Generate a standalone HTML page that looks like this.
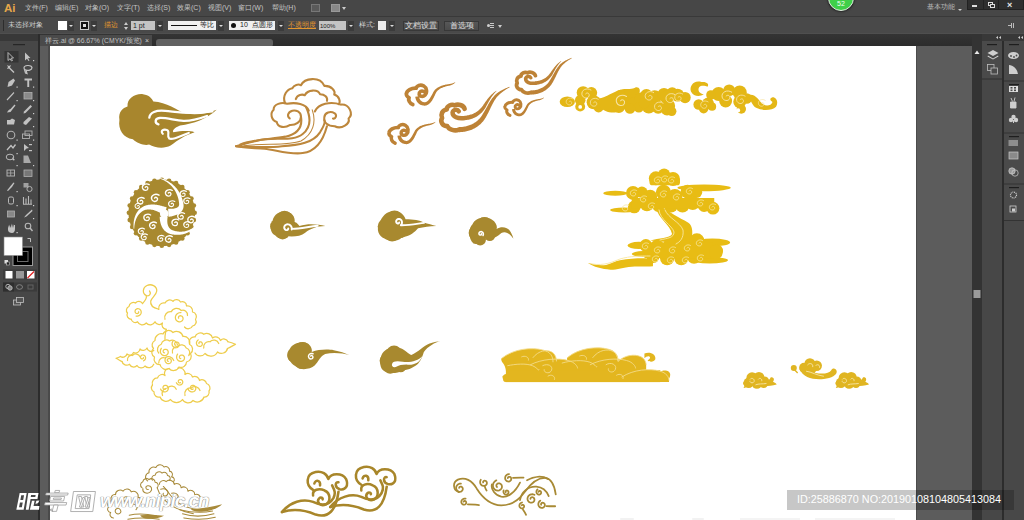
<!DOCTYPE html>
<html><head><meta charset="utf-8">
<style>
*{margin:0;padding:0;box-sizing:border-box}
html,body{width:1024px;height:520px;overflow:hidden;background:#454545;font-family:"Liberation Sans",sans-serif}
.a{position:absolute}
#menubar{left:0;top:0;width:1024px;height:17px;background:#474747;border-bottom:1px solid #393939}
.mi{position:absolute;top:3px;font-size:7px;line-height:10px;color:#c4c4c4;white-space:nowrap}
#ctrl{left:0;top:17px;width:1024px;height:17px;background:#494949;border-bottom:1px solid #4f4f4f}
.ct{position:absolute;font-size:8px;line-height:10px;color:#d6d6d6;white-space:nowrap}
.dd{position:absolute;top:4px;width:6px;height:10px;background:#3b3b3b}
.dd:after{content:"";position:absolute;left:1px;top:4px;border-left:2px solid transparent;border-right:2px solid transparent;border-top:2px solid #dcdcdc}
.box{position:absolute;top:4px;height:9px}
.btn{position:absolute;top:4px;height:10px;background:linear-gradient(#575757,#4b4b4b);border:1px solid #383838;font-size:7.5px;line-height:8px;color:#e0e0e0;text-align:center}
#tabrow{left:40px;top:34px;width:932px;height:12px;background:linear-gradient(#343434,#2c2c2c)}
#tools{left:0;top:34px;width:38px;height:486px;background:#474747}
#toolsb{left:38px;top:34px;width:2px;height:486px;background:#2c2c2c}
#artboard{left:50px;top:46px;width:866px;height:474px;background:#ffffff}
#pbL{left:40px;top:46px;width:10px;height:474px;background:#5c5c5c}
#pbR{left:916px;top:46px;width:56px;height:474px;background:#5c5c5c}
#scroll{left:972px;top:34px;width:10px;height:486px;background:#343434}
#dock1{left:982px;top:34px;width:21px;height:486px;background:#474747;border-left:1px solid #2e2e2e}
#dock2{left:1003px;top:34px;width:21px;height:486px;background:#474747;border-left:2px solid #2e2e2e}
.ti{position:absolute;width:9px;height:9px}
</style></head><body>
<div id="menubar" class="a">
  <div class="a" style="left:4px;top:1px;font-size:11.5px;font-weight:bold;color:#e6a84a;line-height:14px">Ai</div>
  <div class="mi" style="left:25px">文件(F)</div>
  <div class="mi" style="left:55px">编辑(E)</div>
  <div class="mi" style="left:85px">对象(O)</div>
  <div class="mi" style="left:117px">文字(T)</div>
  <div class="mi" style="left:147px">选择(S)</div>
  <div class="mi" style="left:177px">效果(C)</div>
  <div class="mi" style="left:208px">视图(V)</div>
  <div class="mi" style="left:238px">窗口(W)</div>
  <div class="mi" style="left:272px">帮助(H)</div>
  <div class="a" style="left:311px;top:4px;width:9px;height:8px;background:#5a5a5a;border:1px solid #777"></div>
  <div class="a" style="left:331px;top:4px;width:9px;height:8px;background:#888;border:1px solid #999"></div>
  <div class="a" style="left:342px;top:7px;border-left:2px solid transparent;border-right:2px solid transparent;border-top:3px solid #ccc"></div>
  <div class="a" style="left:828px;top:-15px;width:26px;height:26px;border-radius:50%;background:#3fcf49;border:1.5px solid #e4ece4;box-shadow:0 0 1.5px 1px #2a2a2a"></div>
  <div class="a" style="left:837px;top:0px;font-size:7px;line-height:8px;color:#f0fff0">52</div>
  <div class="mi" style="left:927px;top:2px;color:#bdbdbd">基本功能</div>
  <div class="a" style="left:958px;top:9px;border-left:2px solid transparent;border-right:2px solid transparent;border-top:2px solid #ccc"></div>
  <div class="a" style="left:967px;top:0;width:57px;height:10px;background:#2f2f2f;border:1px solid #222;border-top:0"></div>
  <div class="a" style="left:983px;top:0;width:1px;height:10px;background:#222"></div>
  <div class="a" style="left:998px;top:0;width:1px;height:10px;background:#222"></div>
  <div class="a" style="left:972px;top:5px;width:5px;height:2px;background:#ddd"></div>
  <div class="a" style="left:988px;top:2px;width:5px;height:4px;border:1px solid #ddd"></div>
  <div class="a" style="left:990px;top:4px;width:5px;height:4px;border:1px solid #ddd;background:#2f2f2f"></div>
  <div class="a" style="left:1007px;top:0px;font-size:9px;line-height:10px;color:#e8e8e8;font-weight:bold">×</div>
</div>
<div id="ctrl" class="a">
  <div class="a" style="left:3px;top:3px;width:1px;height:11px;background:#2d2d2d"></div>
  <div class="ct" style="left:8px;top:3px;font-size:6.6px;color:#cfcfcf">未选择对象</div>
  <div class="box" style="left:58px;width:9px;background:#fff"></div>
  <div class="dd" style="left:68px"></div>
  <div class="box" style="left:80px;width:9px;background:#111;border:1px solid #ccc"></div>
  <div class="a" style="left:83px;top:7px;width:3px;height:3px;background:#ddd"></div>
  <div class="dd" style="left:91px"></div>
  <div class="ct" style="left:104px;top:3px;color:#e2962e;font-size:7px">描边</div>
  <div class="a" style="left:124px;top:5px;border-left:2px solid transparent;border-right:2px solid transparent;border-bottom:3px solid #ccc"></div>
  <div class="a" style="left:124px;top:10px;border-left:2px solid transparent;border-right:2px solid transparent;border-top:3px solid #ccc"></div>
  <div class="box" style="left:131px;width:24px;background:#c4c4c4"></div>
  <div class="ct" style="left:133px;top:4px;color:#222;font-size:7px">1 pt</div>
  <div class="dd" style="left:157px"></div>
  <div class="box" style="left:168px;width:48px;background:#f0f0f0"></div>
  <div class="a" style="left:171px;top:8px;width:26px;height:1px;background:#111"></div>
  <div class="ct" style="left:200px;top:3px;color:#222;font-size:7px">等比</div>
  <div class="dd" style="left:218px"></div>
  <div class="box" style="left:229px;width:46px;background:#f0f0f0"></div>
  <div class="a" style="left:231px;top:6px;width:5px;height:5px;border-radius:50%;background:#111"></div>
  <div class="ct" style="left:240px;top:3px;color:#222;font-size:7px">10&nbsp; 点圆形</div>
  <div class="dd" style="left:278px"></div>
  <div class="ct" style="left:288px;top:3px;color:#e2962e;font-size:6.6px;text-decoration:underline">不透明度</div>
  <div class="box" style="left:319px;width:27px;background:#c4c4c4"></div>
  <div class="ct" style="left:320px;top:4px;color:#222;font-size:6px">100%</div>
  <div class="dd" style="left:348px"></div>
  <div class="ct" style="left:359px;top:3px;font-size:6.5px">样式:</div>
  <div class="box" style="left:378px;width:8px;background:#ececec"></div>
  <div class="dd" style="left:389px"></div>
  <div class="btn" style="left:403px;width:36px">文档设置</div>
  <div class="btn" style="left:444px;width:35px">首选项</div>
  <div class="a" style="left:487px;top:7px;width:3px;height:3px;background:#d0d0d0;border-radius:50%"></div><div class="a" style="left:490px;top:6px;width:4px;height:1px;background:#c8c8c8"></div><div class="a" style="left:490px;top:8px;width:4px;height:1px;background:#c8c8c8"></div><div class="a" style="left:490px;top:10px;width:4px;height:1px;background:#c8c8c8"></div>
  <div class="a" style="left:498px;top:8px;border-left:2px solid transparent;border-right:2px solid transparent;border-top:3px solid #ccc"></div>
  <div class="a" style="left:1008px;top:8px;width:3px;height:1px;background:#bbb"></div><div class="a" style="left:1011px;top:6px;width:1px;height:5px;background:#bbb"></div><div class="a" style="left:1013px;top:6px;width:1px;height:5px;background:#bbb"></div>
</div>
<div id="tabrow" class="a"></div>
<div class="a" style="left:40px;top:35px;width:112px;height:11px;background:#4a4a4a"></div>
<div class="ct" style="left:45px;top:36px;font-size:6.8px;color:#c0c0c0">祥云.ai @ 66.67% (CMYK/预览)</div>
<div class="ct" style="left:145px;top:36px;font-size:7px;color:#cfcfcf">×</div>
<div class="a" style="left:156px;top:39px;width:117px;height:8px;background:#616161;border-radius:3px"></div>
<div id="tools" class="a"></div>
<div id="toolsb" class="a"></div>
<div class="a" style="left:0;top:34px;width:38px;height:7px;background:#383838"></div>
<div class="a" style="left:14px;top:44px;width:10px;height:1px;background:#222"></div>
<svg class="a" style="left:0;top:34px" width="40" height="290" viewBox="0 34 40 290">
<rect x="4.5" y="51" width="14" height="11.5" fill="#353535"/>
<rect x="13" y="44" width="12" height="1.2" fill="#262626"/>
<g fill="#c2c2c2" stroke="none">
<!-- row1 -->
<path d="M8 52.5 L13.5 58 L11 58.2 L12.5 60.5 L11.5 61 L10 58.8 L8 60.5 Z" fill="none" stroke="#c2c2c2" stroke-width="0.9"/>
<path d="M25 52.5 L30.5 58 L28 58.2 L29.5 60.5 L28.5 61 L27 58.8 L25 60.5 Z"/>
<!-- row2 wand/lasso -->
<path d="M7 65 L9 66 L11 65 L10 67.5 L14.5 72 L13.5 73 L9 68.5 L7 69 L8 67 Z"/>
<path d="M24 68 C24 65 31 64.5 32 67.5 C32 70 28 71 26 70 L27 73.5 L25.5 73 Z" fill="none" stroke="#c2c2c2" stroke-width="1.2"/>
<!-- row3 pen/T -->
<path d="M13.5 78.5 L8.5 82 L7.5 87 L12 85.5 L15 80.5 Z"/>
<path d="M24.5 78.5 H32 V80.5 H29.2 V87 H27.3 V80.5 H24.5 Z"/>
<!-- row4 line/rect -->
<path d="M7 100 L14 92.5" stroke="#c2c2c2" stroke-width="1.1"/>
<rect x="24" y="92.5" width="8" height="6.5" fill="#8a8a8a" stroke="#b0b0b0" stroke-width="0.8"/>
<!-- row5 brush/pencil -->
<path d="M14.5 104.5 L10.5 109 C9 109.5 8 110.5 7 112.5 L10.5 112 L12 110 L15.5 105.5 Z"/>
<path d="M30.5 105 L32 106.5 L25.5 113 L23.5 113.5 L24 111.5 Z"/>
<!-- row6 blob/eraser -->
<path d="M7 120 L7 124.5 L14 124.5 L15 120 L12 118.5 L10 120 Z"/>
<path d="M29 117 L32 118.5 L26 125 L23.5 124 L23.5 122 Z"/>
<!-- row7 rotate/scale -->
<circle cx="11" cy="135" r="3.8" fill="none" stroke="#b0b0b0" stroke-width="1.1"/>
<rect x="22.5" y="134" width="7" height="4.5" fill="none" stroke="#b0b0b0" stroke-width="0.9"/>
<rect x="25" y="131" width="7" height="4.5" fill="none" stroke="#b0b0b0" stroke-width="0.9"/>
<!-- row8 width/free transform -->
<path d="M7 150 L11 145.5 L13 148 L15.5 144.5" fill="none" stroke="#c2c2c2" stroke-width="1.3"/>
<path d="M24 144 L29 148 L26.5 148.5 L24 151 Z"/>
<rect x="29" y="144" width="3" height="1.2"/><rect x="29" y="150" width="3" height="1.2"/>
<!-- row9 shape builder / persp -->
<ellipse cx="10" cy="157" rx="3.8" ry="2.8" fill="none" stroke="#b8b8b8" stroke-width="1"/>
<path d="M12 157 L15 160 L13 160.5 Z"/>
<path d="M23.5 155.5 L23.5 163 L31 163 L28 155.5 Z" fill="#a8a8a8"/>
<!-- row10 mesh/gradient -->
<rect x="7" y="170" width="7.5" height="6" fill="none" stroke="#b8b8b8" stroke-width="0.9"/>
<path d="M7 173 H14.5 M10.7 170 V176" stroke="#b8b8b8" stroke-width="0.7"/>
<rect x="24" y="170" width="8" height="6.5" fill="#777" stroke="#b0b0b0" stroke-width="0.8"/>
<!-- row11 eyedropper/blend -->
<path d="M14.5 183 L12 187 L8 191 L7 190.5 L10.5 186 L13.5 182.5 Z"/>
<rect x="23.5" y="183" width="5" height="4.5" fill="#a0a0a0"/>
<circle cx="29.5" cy="189" r="2.6" fill="none" stroke="#b8b8b8" stroke-width="0.9"/>
<!-- row12 symbol/graph -->
<rect x="8.5" y="197" width="5" height="7" rx="1.5" fill="none" stroke="#b8b8b8" stroke-width="1"/>
<path d="M23.5 204 V197 M26 204 V198.5 M28.5 204 V196 M31 204 V199.5 M23 204.3 H32" stroke="#b8b8b8" stroke-width="1.1"/>
<!-- row13 artboard/slice -->
<rect x="7.5" y="211" width="7" height="6" fill="#888" stroke="#b0b0b0" stroke-width="0.8"/>
<path d="M32 209.5 L26 215 L24 217.5 L26.5 216.5 L32.5 211 Z"/>
<!-- row14 hand/zoom -->
<path d="M8 225 L8 230 C8 232 10 233 12 233 C14 233 15 231 15 229 L15 225 L14 225 L14 228 L13 224 L12 228 L11.5 223.5 L10.5 228 L9.5 224.5 L9 228 Z"/>
<circle cx="28" cy="226" r="2.8" fill="none" stroke="#b8b8b8" stroke-width="1.1"/>
<path d="M30 228 L32.5 231" stroke="#b8b8b8" stroke-width="1.4"/>
</g>
<g fill="#d0d0d0">
<rect x="33" y="60" width="1.2" height="1.2"/><rect x="16.5" y="86.5" width="1.2" height="1.2"/><rect x="33" y="86.5" width="1.2" height="1.2"/>
<rect x="16.5" y="100" width="1.2" height="1.2"/><rect x="33" y="100" width="1.2" height="1.2"/><rect x="33" y="113" width="1.2" height="1.2"/>
<rect x="33" y="126" width="1.2" height="1.2"/><rect x="16.5" y="139.5" width="1.2" height="1.2"/><rect x="33" y="139.5" width="1.2" height="1.2"/>
<rect x="16.5" y="153" width="1.2" height="1.2"/><rect x="16.5" y="165" width="1.2" height="1.2"/><rect x="33" y="165" width="1.2" height="1.2"/>
<rect x="16.5" y="191" width="1.2" height="1.2"/><rect x="16.5" y="205" width="1.2" height="1.2"/><rect x="33" y="205" width="1.2" height="1.2"/>
<rect x="33" y="218" width="1.2" height="1.2"/><rect x="16.5" y="232" width="1.2" height="1.2"/>
</g>
<rect x="13" y="247" width="19.5" height="18.5" fill="#000" stroke="#9a9a9a" stroke-width="1"/>
<rect x="17.5" y="251.5" width="10.5" height="10" fill="none" stroke="#6a6a6a" stroke-width="1"/>
<rect x="4" y="237" width="18.5" height="18.5" fill="#fff" stroke="#8a8a8a" stroke-width="0.6"/>
<path d="M27.5 238.5 H30.5 V242" fill="none" stroke="#c8c8c8" stroke-width="0.9"/>
<rect x="4.5" y="260" width="3.5" height="3.5" fill="#ddd"/><rect x="6.5" y="262" width="3" height="3" fill="#222" stroke="#ddd" stroke-width="0.5"/>
<rect x="3" y="269.5" width="34" height="10" fill="#3d3d3d"/>
<rect x="5.5" y="271" width="7" height="7.5" fill="#fff"/>
<rect x="16" y="271" width="8" height="7.5" fill="#999"/>
<rect x="27" y="271" width="7.5" height="7.5" fill="#fff"/>
<path d="M27.5 278 L34 271.5" stroke="#e02020" stroke-width="1.3"/>
<rect x="3" y="282.5" width="34" height="9" fill="#3b3b3b"/>
<rect x="3" y="282.5" width="11" height="9" fill="#2e2e2e"/>
<circle cx="8" cy="286.5" r="2.2" fill="none" stroke="#bbb" stroke-width="0.9"/><circle cx="10" cy="288" r="2.2" fill="#888" stroke="#bbb" stroke-width="0.9"/>
<ellipse cx="19.5" cy="287" rx="3" ry="2.3" fill="none" stroke="#888" stroke-width="0.9"/>
<rect x="28" y="285" width="5" height="4" fill="none" stroke="#666" stroke-width="0.9"/>
<rect x="13.5" y="300" width="7" height="5" fill="#555" stroke="#c0c0c0" stroke-width="0.8"/>
<rect x="16.5" y="297.5" width="7" height="5" fill="#555" stroke="#c0c0c0" stroke-width="0.8"/>
</svg>

<div id="pbL" class="a"></div><div class="a" style="left:48px;top:46px;width:2px;height:474px;background:#4a4a4a"></div>
<div id="artboard" class="a"></div>
<div id="pbR" class="a"></div><div class="a" style="left:916px;top:46px;width:1px;height:474px;background:#4c4c4c"></div>
<div id="scroll" class="a"></div>
<div id="dock1" class="a"></div>
<div id="dock2" class="a"></div>
<svg class="a" style="left:972px;top:34px" width="52" height="486" viewBox="972 34 52 486">
<rect x="972" y="34" width="10" height="486" fill="#333333"/>
<path d="M974.5 54 L977 50.5 L979.5 54 Z" fill="#e8e8e8"/>
<rect x="973.5" y="290" width="7" height="8" fill="#9a9a9a"/>
<rect x="982" y="34" width="20" height="486" fill="#474747"/>
<rect x="1002" y="34" width="2" height="486" fill="#2c2c2c"/>
<rect x="1004" y="34" width="20" height="486" fill="#484848"/>
<rect x="982" y="34" width="42" height="7" fill="#383838"/>
<rect x="982" y="41" width="20" height="37.5" fill="#4a4a4a"/>
<rect x="982" y="78.5" width="20" height="1" fill="#333"/>
<rect x="1004" y="41" width="20" height="179" fill="#4a4a4a"/>
<rect x="1004" y="80.5" width="20" height="1" fill="#333"/>
<rect x="1004" y="132.5" width="20" height="1" fill="#333"/>
<rect x="1004" y="183.5" width="20" height="1" fill="#333"/>
<rect x="1004" y="220" width="20" height="1" fill="#333"/>
<g fill="#1e1e1e"><rect x="987" y="44" width="10" height="1.2"/><rect x="1009" y="44" width="10" height="1.2"/><rect x="1009" y="84" width="10" height="1.2"/><rect x="1009" y="136" width="10" height="1.2"/><rect x="1009" y="187" width="10" height="1.2"/></g>
<g fill="#cfcfcf">
<path d="M996 37.5 L998 36 V39 Z M999 37.5 L1001 36 V39 Z"/>
<path d="M1018 37.5 L1020 36 V39 Z M1021 37.5 L1023 36 V39 Z"/>
<path d="M993 50 L998.5 53 L993 56 L987.5 53 Z"/>
<path d="M988 55.5 L993 58.5 L998 55.5 L998.5 56.5 L993 59.5 L987.5 56.5 Z"/>
<rect x="987.5" y="64.5" width="6.5" height="6" fill="none" stroke="#bdbdbd" stroke-width="0.8"/>
<rect x="991" y="68" width="6.5" height="6" fill="#4a4a4a" stroke="#bdbdbd" stroke-width="0.8"/>
<ellipse cx="1013.5" cy="55.5" rx="5.5" ry="3.5"/>
<g fill="#4a4a4a"><circle cx="1011" cy="56" r="0.9"/><circle cx="1014" cy="57" r="0.9"/><circle cx="1016.5" cy="55.5" r="0.9"/></g>
<path d="M1009 74 L1009 65 C1013 65 1017 68.5 1018 74 Z"/>
<rect x="1009" y="86" width="9" height="6" fill="#ddd"/>
<g fill="#4a4a4a"><rect x="1010.5" y="87" width="2" height="1.6"/><rect x="1014" y="87" width="2" height="1.6"/><rect x="1010.5" y="89.5" width="2" height="1.6"/><rect x="1014" y="89.5" width="2" height="1.6"/></g>
<path d="M1010.5 102 H1016 V108 H1010.5 Z M1011 98 L1012.5 101.5 M1015 97.5 L1014 101.5" stroke="#cfcfcf" stroke-width="0.9"/>
<circle cx="1013.5" cy="117" r="2.2"/><circle cx="1011" cy="120" r="2.2"/><circle cx="1016" cy="120" r="2.2"/><rect x="1013" y="120" width="1" height="3"/>
<rect x="1008.5" y="140.5" width="9.5" height="1"/><rect x="1008.5" y="142.5" width="9.5" height="1"/><rect x="1008.5" y="144.5" width="9.5" height="1"/>
<rect x="1009" y="152" width="9" height="7" fill="#8a8a8a" stroke="#c8c8c8" stroke-width="0.7"/>
<circle cx="1012" cy="171" r="3.2" fill="#9a9a9a" stroke="#cfcfcf" stroke-width="0.7"/><circle cx="1015" cy="173" r="3.2" fill="none" stroke="#cfcfcf" stroke-width="0.7"/>
<circle cx="1013.5" cy="195" r="3" fill="none" stroke="#cfcfcf" stroke-width="1.2" stroke-dasharray="1 0.8"/>
<rect x="1010" y="206" width="6" height="6" fill="none" stroke="#cfcfcf" stroke-width="0.8"/><rect x="1012" y="208.5" width="3" height="3"/>
</g>
</svg>

<svg class="a" id="art" style="left:0;top:0" width="1024" height="520" viewBox="0 0 1024 520">
<g transform="translate(110 85) scale(0.13468)">
<path fill="#a8862d" d="M70 260 C60 200 95 170 130 160 C125 100 185 62 245 68 C290 74 312 100 322 122 C420 125 500 190 560 212 C650 228 730 210 792 184 C720 250 620 290 520 300 C475 318 462 338 470 350 C530 340 590 338 628 350 C560 372 510 402 450 450 C400 476 330 466 290 442 C255 452 200 432 170 402 C100 396 58 330 70 260 Z"/>
<path fill="none" stroke="#fff" stroke-width="17" stroke-linecap="round" d="M292 242 C296 205 340 185 410 192 C500 200 600 222 760 196"/>
<path fill="none" stroke="#fff" stroke-width="17" stroke-linecap="round" d="M360 292 C330 285 332 248 368 245 C420 242 480 262 545 266 C610 268 670 248 720 230"/>
<path fill="none" stroke="#fff" stroke-width="16" stroke-linecap="round" d="M392 362 C372 345 395 322 425 335 C448 348 418 380 440 398 C470 412 520 378 585 356"/>
</g>
<g transform="translate(230 70) scale(0.1731)" fill="none" stroke="#bd873c" stroke-width="12" stroke-linecap="round" stroke-linejoin="round">
<path d="M318 192 C300 150 330 110 360 105 C370 85 395 80 410 88 C430 45 520 35 545 92 C585 90 612 120 602 142 C632 152 640 182 628 198"/>
<path d="M380 168 C388 142 418 138 432 146 C448 112 508 110 520 140 C548 140 566 160 560 178"/>
<path d="M455 235 C440 195 380 185 330 195 C300 185 250 195 252 230 C230 250 238 290 270 300 C275 335 320 335 345 318 C380 320 410 300 410 270 C410 240 380 230 360 235 C330 245 330 270 345 280"/>
<path d="M490 240 C510 195 580 180 640 200 C690 195 715 255 685 280 C695 310 645 345 605 325 C565 325 540 305 545 272 C548 245 580 235 605 250 C620 262 610 285 595 280"/>
<path d="M440 215 C470 280 470 330 420 370 C360 420 250 380 150 410 C110 420 70 430 35 440 C120 445 220 450 300 440 C400 435 480 420 520 360 C545 320 550 300 545 290"/>
<path d="M410 270 C420 330 390 370 320 385 C240 400 140 400 60 430"/>
<path d="M560 325 C540 400 500 470 420 480 C340 490 260 460 200 455 C140 450 80 450 35 440"/>
<path d="M475 230 C500 300 480 370 410 410 C330 440 200 420 80 438" stroke-width="6"/>
</g>

<g transform="translate(400.0 75.0) scale(0.0673)" fill="none" stroke="#bd8236" stroke-linecap="round" stroke-linejoin="round"><path d="M240 195 C170 190 100 230 95 280 C90 310 120 330 135 340 C120 370 140 420 190 440" stroke-width="56"/><path d="M350 245 C320 225 280 250 285 285 C290 320 340 330 370 300 C410 260 400 190 350 160 C300 135 250 160 240 195" stroke-width="54"/><path d="M227.1 322.9 L227.8 329.4 L228.9 336.4 L230.2 343.3 L231.8 350.2 L233.7 356.9 L235.9 363.6 L238.4 370.1 L241.1 376.5 L244.2 382.7 L247.6 388.8 L251.2 394.7 L255.1 400.4 L259.4 405.9 L263.9 411.3 L268.7 416.3 L273.8 421.2 L279.1 425.7 L284.8 430.0 L290.7 434.0 L296.8 437.7 L303.2 441.1 L309.8 444.1 L316.7 446.8 L323.8 449.1 L331.0 451.1 L338.5 452.7 L346.1 453.9 L353.9 454.7 L361.9 455.1 L371.1 455.1 L380.8 453.9 L389.6 452.0 L398.1 449.3 L406.2 446.0 L414.0 442.1 L421.4 437.6 L428.5 432.7 L435.2 427.3 L441.6 421.6 L447.7 415.5 L453.6 409.1 L459.2 402.5 L464.6 395.5 L469.8 388.4 L474.8 381.0 L479.7 373.4 L484.4 365.6 L489.0 357.7 L493.4 349.7 L497.8 341.6 L502.0 333.3 L506.2 325.0 L510.3 316.7 L514.3 308.3 L518.2 299.9 L522.1 291.5 L526.0 283.2 L529.8 275.0 L533.6 266.8 L536.8 259.8 L539.6 255.5 L543.3 250.3 L547.2 245.3 L551.4 240.4 L555.8 235.6 L560.5 231.0 L565.5 226.5 L570.7 222.1 L576.1 217.9 L581.8 213.7 L587.8 209.7 L594.0 205.9 L600.4 202.1 L607.1 198.5 L614.0 195.0 L621.1 191.6 L628.4 188.3 L636.0 185.2 L643.8 182.2 L651.7 179.3 L659.9 176.5 L668.3 173.9 L676.9 171.3 L685.6 168.9 L694.6 166.5 L703.7 164.3 L712.9 162.2 L722.4 160.2 L732.0 158.3 L742.1 156.4 L746.8 154.9 L750.8 153.5 L754.7 152.1 L758.4 150.7 L762.2 149.3 L765.8 147.8 L769.3 146.3 L772.8 144.7 L776.1 143.2 L779.4 141.6 L782.6 140.0 L785.6 138.4 L788.6 136.8 L791.5 135.2 L794.2 133.6 L796.9 131.9 L799.5 130.3 L801.9 128.6 L804.2 127.0 L806.4 125.3 L808.5 123.7 L810.5 122.0 L812.4 120.4 L814.1 118.8 L815.7 117.1 L817.1 115.5 L818.4 113.9 L819.6 112.4 L820.7 110.8 L821.5 109.3 L818.5 106.7 L817.2 107.6 L815.9 108.5 L814.4 109.4 L812.8 110.4 L811.1 111.3 L809.3 112.2 L807.4 113.2 L805.3 114.1 L803.2 115.1 L801.0 116.1 L798.6 117.0 L796.2 118.0 L793.6 119.0 L791.0 120.0 L788.3 120.9 L785.4 121.9 L782.5 122.8 L779.5 123.8 L776.4 124.7 L773.2 125.6 L769.9 126.5 L766.6 127.4 L763.2 128.3 L759.7 129.1 L756.1 130.0 L752.4 130.8 L748.7 131.6 L744.9 132.3 L741.1 133.1 L737.9 133.6 L728.2 134.8 L718.2 136.2 L708.3 137.7 L698.6 139.4 L689.0 141.1 L679.5 143.0 L670.2 145.0 L661.0 147.1 L652.0 149.4 L643.1 151.8 L634.3 154.4 L625.8 157.1 L617.4 160.0 L609.1 163.0 L601.0 166.3 L593.1 169.7 L585.4 173.2 L577.9 177.0 L570.5 181.0 L563.3 185.1 L556.4 189.5 L549.6 194.1 L543.1 198.9 L536.7 204.0 L530.6 209.2 L524.8 214.7 L519.1 220.5 L513.8 226.5 L508.7 232.7 L503.2 240.2 L498.4 249.3 L494.2 257.4 L489.9 265.5 L485.7 273.6 L481.5 281.6 L477.2 289.6 L473.0 297.6 L468.7 305.4 L464.3 313.1 L460.0 320.7 L455.6 328.0 L451.2 335.2 L446.7 342.2 L442.2 348.9 L437.7 355.3 L433.1 361.4 L428.5 367.2 L423.8 372.6 L419.2 377.6 L414.5 382.3 L409.8 386.5 L405.1 390.2 L400.5 393.6 L395.9 396.5 L391.3 398.9 L386.7 400.9 L382.2 402.5 L377.6 403.7 L373.0 404.5 L368.9 404.9 L364.3 404.5 L358.9 404.0 L353.7 403.2 L348.8 402.2 L344.0 401.0 L339.5 399.5 L335.2 397.9 L331.2 396.1 L327.3 394.1 L323.6 391.9 L320.0 389.6 L316.7 387.1 L313.5 384.4 L310.4 381.6 L307.6 378.7 L304.8 375.5 L302.2 372.3 L299.8 368.9 L297.5 365.3 L295.4 361.6 L293.4 357.7 L291.6 353.8 L289.9 349.6 L288.4 345.4 L287.1 341.0 L285.9 336.6 L284.9 332.0 L284.1 327.3 L283.4 322.5 L282.9 317.1 Z" fill="#bd8236" stroke="none"/></g>
<g transform="translate(382.9 115.0) scale(0.0640)" fill="none" stroke="#bd8236" stroke-linecap="round" stroke-linejoin="round"><path d="M240 195 C170 190 100 230 95 280 C90 310 120 330 135 340 C120 370 140 420 190 440" stroke-width="56"/><path d="M350 245 C320 225 280 250 285 285 C290 320 340 330 370 300 C410 260 400 190 350 160 C300 135 250 160 240 195" stroke-width="54"/><path d="M227.1 322.9 L227.8 329.4 L228.9 336.4 L230.2 343.3 L231.8 350.2 L233.7 356.9 L235.9 363.6 L238.4 370.1 L241.1 376.5 L244.2 382.7 L247.6 388.8 L251.2 394.7 L255.1 400.4 L259.4 405.9 L263.9 411.3 L268.7 416.3 L273.8 421.2 L279.1 425.7 L284.8 430.0 L290.7 434.0 L296.8 437.7 L303.2 441.1 L309.8 444.1 L316.7 446.8 L323.8 449.1 L331.0 451.1 L338.5 452.7 L346.1 453.9 L353.9 454.7 L361.9 455.1 L371.1 455.1 L380.8 453.9 L389.6 452.0 L398.1 449.3 L406.2 446.0 L414.0 442.1 L421.4 437.6 L428.5 432.7 L435.2 427.3 L441.6 421.6 L447.7 415.5 L453.6 409.1 L459.2 402.5 L464.6 395.5 L469.8 388.4 L474.8 381.0 L479.7 373.4 L484.4 365.6 L489.0 357.7 L493.4 349.7 L497.8 341.6 L502.0 333.3 L506.2 325.0 L510.3 316.7 L514.3 308.3 L518.2 299.9 L522.1 291.5 L526.0 283.2 L529.8 275.0 L533.6 266.8 L536.8 259.8 L539.6 255.5 L543.3 250.3 L547.2 245.3 L551.4 240.4 L555.8 235.6 L560.5 231.0 L565.5 226.5 L570.7 222.1 L576.1 217.9 L581.8 213.7 L587.8 209.7 L594.0 205.9 L600.4 202.1 L607.1 198.5 L614.0 195.0 L621.1 191.6 L628.4 188.3 L636.0 185.2 L643.8 182.2 L651.7 179.3 L659.9 176.5 L668.3 173.9 L676.9 171.3 L685.6 168.9 L694.6 166.5 L703.7 164.3 L712.9 162.2 L722.4 160.2 L732.0 158.3 L742.1 156.4 L746.8 154.9 L750.8 153.5 L754.7 152.1 L758.4 150.7 L762.2 149.3 L765.8 147.8 L769.3 146.3 L772.8 144.7 L776.1 143.2 L779.4 141.6 L782.6 140.0 L785.6 138.4 L788.6 136.8 L791.5 135.2 L794.2 133.6 L796.9 131.9 L799.5 130.3 L801.9 128.6 L804.2 127.0 L806.4 125.3 L808.5 123.7 L810.5 122.0 L812.4 120.4 L814.1 118.8 L815.7 117.1 L817.1 115.5 L818.4 113.9 L819.6 112.4 L820.7 110.8 L821.5 109.3 L818.5 106.7 L817.2 107.6 L815.9 108.5 L814.4 109.4 L812.8 110.4 L811.1 111.3 L809.3 112.2 L807.4 113.2 L805.3 114.1 L803.2 115.1 L801.0 116.1 L798.6 117.0 L796.2 118.0 L793.6 119.0 L791.0 120.0 L788.3 120.9 L785.4 121.9 L782.5 122.8 L779.5 123.8 L776.4 124.7 L773.2 125.6 L769.9 126.5 L766.6 127.4 L763.2 128.3 L759.7 129.1 L756.1 130.0 L752.4 130.8 L748.7 131.6 L744.9 132.3 L741.1 133.1 L737.9 133.6 L728.2 134.8 L718.2 136.2 L708.3 137.7 L698.6 139.4 L689.0 141.1 L679.5 143.0 L670.2 145.0 L661.0 147.1 L652.0 149.4 L643.1 151.8 L634.3 154.4 L625.8 157.1 L617.4 160.0 L609.1 163.0 L601.0 166.3 L593.1 169.7 L585.4 173.2 L577.9 177.0 L570.5 181.0 L563.3 185.1 L556.4 189.5 L549.6 194.1 L543.1 198.9 L536.7 204.0 L530.6 209.2 L524.8 214.7 L519.1 220.5 L513.8 226.5 L508.7 232.7 L503.2 240.2 L498.4 249.3 L494.2 257.4 L489.9 265.5 L485.7 273.6 L481.5 281.6 L477.2 289.6 L473.0 297.6 L468.7 305.4 L464.3 313.1 L460.0 320.7 L455.6 328.0 L451.2 335.2 L446.7 342.2 L442.2 348.9 L437.7 355.3 L433.1 361.4 L428.5 367.2 L423.8 372.6 L419.2 377.6 L414.5 382.3 L409.8 386.5 L405.1 390.2 L400.5 393.6 L395.9 396.5 L391.3 398.9 L386.7 400.9 L382.2 402.5 L377.6 403.7 L373.0 404.5 L368.9 404.9 L364.3 404.5 L358.9 404.0 L353.7 403.2 L348.8 402.2 L344.0 401.0 L339.5 399.5 L335.2 397.9 L331.2 396.1 L327.3 394.1 L323.6 391.9 L320.0 389.6 L316.7 387.1 L313.5 384.4 L310.4 381.6 L307.6 378.7 L304.8 375.5 L302.2 372.3 L299.8 368.9 L297.5 365.3 L295.4 361.6 L293.4 357.7 L291.6 353.8 L289.9 349.6 L288.4 345.4 L287.1 341.0 L285.9 336.6 L284.9 332.0 L284.1 327.3 L283.4 322.5 L282.9 317.1 Z" fill="#bd8236" stroke="none"/></g>
<g transform="translate(499.7 91.7) scale(0.0540)" fill="none" stroke="#bd8236" stroke-linecap="round" stroke-linejoin="round"><path d="M240 195 C170 190 100 230 95 280 C90 310 120 330 135 340 C120 370 140 420 190 440" stroke-width="56"/><path d="M350 245 C320 225 280 250 285 285 C290 320 340 330 370 300 C410 260 400 190 350 160 C300 135 250 160 240 195" stroke-width="54"/><path d="M227.1 322.9 L227.8 329.4 L228.9 336.4 L230.2 343.3 L231.8 350.2 L233.7 356.9 L235.9 363.6 L238.4 370.1 L241.1 376.5 L244.2 382.7 L247.6 388.8 L251.2 394.7 L255.1 400.4 L259.4 405.9 L263.9 411.3 L268.7 416.3 L273.8 421.2 L279.1 425.7 L284.8 430.0 L290.7 434.0 L296.8 437.7 L303.2 441.1 L309.8 444.1 L316.7 446.8 L323.8 449.1 L331.0 451.1 L338.5 452.7 L346.1 453.9 L353.9 454.7 L361.9 455.1 L371.1 455.1 L380.8 453.9 L389.6 452.0 L398.1 449.3 L406.2 446.0 L414.0 442.1 L421.4 437.6 L428.5 432.7 L435.2 427.3 L441.6 421.6 L447.7 415.5 L453.6 409.1 L459.2 402.5 L464.6 395.5 L469.8 388.4 L474.8 381.0 L479.7 373.4 L484.4 365.6 L489.0 357.7 L493.4 349.7 L497.8 341.6 L502.0 333.3 L506.2 325.0 L510.3 316.7 L514.3 308.3 L518.2 299.9 L522.1 291.5 L526.0 283.2 L529.8 275.0 L533.6 266.8 L536.8 259.8 L539.6 255.5 L543.3 250.3 L547.2 245.3 L551.4 240.4 L555.8 235.6 L560.5 231.0 L565.5 226.5 L570.7 222.1 L576.1 217.9 L581.8 213.7 L587.8 209.7 L594.0 205.9 L600.4 202.1 L607.1 198.5 L614.0 195.0 L621.1 191.6 L628.4 188.3 L636.0 185.2 L643.8 182.2 L651.7 179.3 L659.9 176.5 L668.3 173.9 L676.9 171.3 L685.6 168.9 L694.6 166.5 L703.7 164.3 L712.9 162.2 L722.4 160.2 L732.0 158.3 L742.1 156.4 L746.8 154.9 L750.8 153.5 L754.7 152.1 L758.4 150.7 L762.2 149.3 L765.8 147.8 L769.3 146.3 L772.8 144.7 L776.1 143.2 L779.4 141.6 L782.6 140.0 L785.6 138.4 L788.6 136.8 L791.5 135.2 L794.2 133.6 L796.9 131.9 L799.5 130.3 L801.9 128.6 L804.2 127.0 L806.4 125.3 L808.5 123.7 L810.5 122.0 L812.4 120.4 L814.1 118.8 L815.7 117.1 L817.1 115.5 L818.4 113.9 L819.6 112.4 L820.7 110.8 L821.5 109.3 L818.5 106.7 L817.2 107.6 L815.9 108.5 L814.4 109.4 L812.8 110.4 L811.1 111.3 L809.3 112.2 L807.4 113.2 L805.3 114.1 L803.2 115.1 L801.0 116.1 L798.6 117.0 L796.2 118.0 L793.6 119.0 L791.0 120.0 L788.3 120.9 L785.4 121.9 L782.5 122.8 L779.5 123.8 L776.4 124.7 L773.2 125.6 L769.9 126.5 L766.6 127.4 L763.2 128.3 L759.7 129.1 L756.1 130.0 L752.4 130.8 L748.7 131.6 L744.9 132.3 L741.1 133.1 L737.9 133.6 L728.2 134.8 L718.2 136.2 L708.3 137.7 L698.6 139.4 L689.0 141.1 L679.5 143.0 L670.2 145.0 L661.0 147.1 L652.0 149.4 L643.1 151.8 L634.3 154.4 L625.8 157.1 L617.4 160.0 L609.1 163.0 L601.0 166.3 L593.1 169.7 L585.4 173.2 L577.9 177.0 L570.5 181.0 L563.3 185.1 L556.4 189.5 L549.6 194.1 L543.1 198.9 L536.7 204.0 L530.6 209.2 L524.8 214.7 L519.1 220.5 L513.8 226.5 L508.7 232.7 L503.2 240.2 L498.4 249.3 L494.2 257.4 L489.9 265.5 L485.7 273.6 L481.5 281.6 L477.2 289.6 L473.0 297.6 L468.7 305.4 L464.3 313.1 L460.0 320.7 L455.6 328.0 L451.2 335.2 L446.7 342.2 L442.2 348.9 L437.7 355.3 L433.1 361.4 L428.5 367.2 L423.8 372.6 L419.2 377.6 L414.5 382.3 L409.8 386.5 L405.1 390.2 L400.5 393.6 L395.9 396.5 L391.3 398.9 L386.7 400.9 L382.2 402.5 L377.6 403.7 L373.0 404.5 L368.9 404.9 L364.3 404.5 L358.9 404.0 L353.7 403.2 L348.8 402.2 L344.0 401.0 L339.5 399.5 L335.2 397.9 L331.2 396.1 L327.3 394.1 L323.6 391.9 L320.0 389.6 L316.7 387.1 L313.5 384.4 L310.4 381.6 L307.6 378.7 L304.8 375.5 L302.2 372.3 L299.8 368.9 L297.5 365.3 L295.4 361.6 L293.4 357.7 L291.6 353.8 L289.9 349.6 L288.4 345.4 L287.1 341.0 L285.9 336.6 L284.9 332.0 L284.1 327.3 L283.4 322.5 L282.9 317.1 Z" fill="#bd8236" stroke="none"/></g>
<g transform="translate(430.0 80.0) scale(0.1154)" fill="none" stroke="#bd8236" stroke-linecap="round" stroke-linejoin="round"><path d="M300 250 C290 215 240 205 215 220 C185 205 145 225 145 255 C105 260 90 300 105 330 C85 360 110 400 150 400 C165 430 215 445 250 430" stroke-width="40"/><path d="M250 272 C238 250 200 255 195 282 C195 320 240 338 300 330" stroke-width="38"/><path d="M250.3 452.0 L258.5 451.9 L267.0 451.6 L275.4 451.0 L283.7 450.2 L292.0 449.2 L300.1 448.0 L308.3 446.5 L316.3 444.9 L324.2 443.0 L332.1 440.8 L339.8 438.5 L347.5 435.9 L355.1 433.1 L362.5 430.1 L369.9 426.9 L377.1 423.4 L384.2 419.7 L391.2 415.8 L398.1 411.7 L404.9 407.4 L411.5 402.8 L418.0 398.1 L424.4 393.1 L430.6 387.9 L436.7 382.5 L442.6 376.9 L448.4 371.0 L454.0 365.0 L459.5 358.8 L465.2 351.8 L470.6 343.8 L475.4 336.4 L479.9 329.1 L484.3 321.8 L488.5 314.5 L492.6 307.2 L496.5 300.0 L500.3 292.8 L504.0 285.6 L507.5 278.5 L511.0 271.5 L514.5 264.5 L517.8 257.5 L521.1 250.6 L524.4 243.7 L527.7 236.9 L531.0 230.2 L534.3 223.5 L537.6 216.9 L540.9 210.3 L544.3 203.8 L547.8 197.4 L551.3 191.0 L555.0 184.6 L558.7 178.4 L562.6 172.2 L566.6 166.0 L570.7 159.9 L575.0 153.9 L579.2 148.2 L582.4 144.7 L586.0 140.9 L589.7 137.1 L593.4 133.4 L597.0 129.9 L600.7 126.4 L604.4 123.0 L608.1 119.8 L611.7 116.6 L615.4 113.4 L619.1 110.4 L622.8 107.4 L626.6 104.5 L630.3 101.7 L634.0 98.9 L637.8 96.2 L641.5 93.6 L645.3 90.9 L649.1 88.4 L652.8 85.8 L656.6 83.3 L660.4 80.9 L664.2 78.4 L668.0 76.0 L671.8 73.6 L675.6 71.2 L679.4 68.9 L683.3 66.5 L687.1 64.1 L690.9 61.8 L689.1 58.2 L684.9 59.9 L680.7 61.5 L676.6 63.2 L672.4 64.9 L668.2 66.6 L664.0 68.3 L659.8 70.1 L655.6 71.9 L651.4 73.8 L647.2 75.7 L642.9 77.6 L638.7 79.6 L634.5 81.7 L630.2 83.8 L626.0 86.1 L621.7 88.4 L617.4 90.7 L613.2 93.2 L608.9 95.8 L604.6 98.4 L600.3 101.2 L595.9 104.0 L591.6 107.0 L587.3 110.1 L583.0 113.3 L578.6 116.6 L574.3 120.1 L570.0 123.7 L565.6 127.4 L560.8 131.8 L555.2 138.2 L550.1 144.3 L545.1 150.6 L540.4 156.9 L535.7 163.2 L531.3 169.6 L527.0 176.0 L522.7 182.5 L518.6 189.1 L514.6 195.6 L510.7 202.2 L506.9 208.8 L503.1 215.4 L499.3 222.1 L495.6 228.8 L491.9 235.4 L488.1 242.1 L484.4 248.8 L480.7 255.5 L476.9 262.2 L473.1 268.9 L469.2 275.6 L465.2 282.3 L461.2 289.0 L457.0 295.6 L452.8 302.3 L448.4 308.9 L443.9 315.6 L439.2 322.2 L434.8 328.2 L430.4 333.0 L425.5 338.2 L420.5 343.2 L415.3 347.9 L410.1 352.5 L404.8 356.9 L399.4 361.1 L393.8 365.1 L388.2 369.0 L382.5 372.6 L376.7 376.1 L370.8 379.4 L364.9 382.5 L358.8 385.4 L352.6 388.1 L346.4 390.7 L340.1 393.1 L333.6 395.3 L327.1 397.3 L320.5 399.2 L313.8 400.8 L307.1 402.3 L300.2 403.7 L293.3 404.8 L286.3 405.8 L279.2 406.6 L272.0 407.2 L264.7 407.6 L257.4 407.9 L249.7 408.0 Z" fill="#bd8236" stroke="none"/><path d="M302.5 348.8 L310.6 347.7 L318.7 346.4 L326.7 345.0 L334.4 343.4 L342.0 341.6 L349.4 339.6 L356.7 337.5 L363.7 335.2 L370.7 332.7 L377.4 330.0 L384.1 327.2 L390.5 324.1 L396.8 320.9 L403.0 317.5 L409.0 313.9 L414.8 310.1 L420.5 306.1 L426.0 302.0 L431.4 297.6 L436.6 293.1 L441.7 288.4 L446.7 283.5 L451.5 278.4 L456.2 273.2 L460.7 267.7 L465.2 262.1 L469.5 256.3 L473.7 250.3 L477.8 244.2 L481.9 237.7 L484.8 232.1 L487.6 227.0 L490.3 221.9 L493.0 216.7 L495.8 211.6 L498.5 206.6 L501.3 201.5 L504.0 196.5 L506.8 191.5 L509.6 186.5 L512.4 181.5 L515.3 176.6 L518.2 171.7 L521.1 166.9 L524.0 162.1 L527.0 157.4 L530.1 152.6 L533.2 148.0 L536.4 143.4 L539.6 138.8 L542.9 134.3 L546.3 129.9 L549.7 125.5 L553.2 121.1 L556.8 116.9 L560.5 112.7 L564.3 108.5 L568.2 104.5 L572.1 100.5 L576.2 96.6 L573.8 93.4 L569.0 96.6 L564.2 99.9 L559.6 103.3 L555.0 106.9 L550.6 110.5 L546.2 114.2 L541.8 118.1 L537.6 122.0 L533.4 126.0 L529.3 130.1 L525.2 134.3 L521.3 138.5 L517.4 142.8 L513.5 147.2 L509.7 151.6 L506.0 156.1 L502.3 160.7 L498.6 165.3 L495.1 169.9 L491.5 174.6 L488.0 179.4 L484.6 184.1 L481.1 188.9 L477.7 193.7 L474.4 198.5 L471.0 203.3 L467.7 208.2 L464.4 213.0 L461.2 217.9 L458.1 222.3 L454.2 227.6 L450.0 232.9 L445.9 237.9 L441.7 242.7 L437.4 247.4 L433.1 251.8 L428.7 256.0 L424.3 260.1 L419.8 263.9 L415.2 267.6 L410.6 271.1 L405.8 274.5 L401.0 277.7 L396.1 280.7 L391.0 283.6 L385.9 286.3 L380.6 288.9 L375.2 291.4 L369.7 293.7 L364.0 295.9 L358.2 298.0 L352.2 299.9 L346.1 301.7 L339.7 303.4 L333.2 305.0 L326.5 306.5 L319.6 307.8 L312.5 309.0 L305.2 310.1 L297.5 311.2 Z" fill="#bd8236" stroke="none"/></g>
<g transform="translate(507.4 52.3) scale(0.0935)" fill="none" stroke="#bd8236" stroke-linecap="round" stroke-linejoin="round"><path d="M300 250 C290 215 240 205 215 220 C185 205 145 225 145 255 C105 260 90 300 105 330 C85 360 110 400 150 400 C165 430 215 445 250 430" stroke-width="40"/><path d="M250 272 C238 250 200 255 195 282 C195 320 240 338 300 330" stroke-width="38"/><path d="M250.3 452.0 L258.5 451.9 L267.0 451.6 L275.4 451.0 L283.7 450.2 L292.0 449.2 L300.1 448.0 L308.3 446.5 L316.3 444.9 L324.2 443.0 L332.1 440.8 L339.8 438.5 L347.5 435.9 L355.1 433.1 L362.5 430.1 L369.9 426.9 L377.1 423.4 L384.2 419.7 L391.2 415.8 L398.1 411.7 L404.9 407.4 L411.5 402.8 L418.0 398.1 L424.4 393.1 L430.6 387.9 L436.7 382.5 L442.6 376.9 L448.4 371.0 L454.0 365.0 L459.5 358.8 L465.2 351.8 L470.6 343.8 L475.4 336.4 L479.9 329.1 L484.3 321.8 L488.5 314.5 L492.6 307.2 L496.5 300.0 L500.3 292.8 L504.0 285.6 L507.5 278.5 L511.0 271.5 L514.5 264.5 L517.8 257.5 L521.1 250.6 L524.4 243.7 L527.7 236.9 L531.0 230.2 L534.3 223.5 L537.6 216.9 L540.9 210.3 L544.3 203.8 L547.8 197.4 L551.3 191.0 L555.0 184.6 L558.7 178.4 L562.6 172.2 L566.6 166.0 L570.7 159.9 L575.0 153.9 L579.2 148.2 L582.4 144.7 L586.0 140.9 L589.7 137.1 L593.4 133.4 L597.0 129.9 L600.7 126.4 L604.4 123.0 L608.1 119.8 L611.7 116.6 L615.4 113.4 L619.1 110.4 L622.8 107.4 L626.6 104.5 L630.3 101.7 L634.0 98.9 L637.8 96.2 L641.5 93.6 L645.3 90.9 L649.1 88.4 L652.8 85.8 L656.6 83.3 L660.4 80.9 L664.2 78.4 L668.0 76.0 L671.8 73.6 L675.6 71.2 L679.4 68.9 L683.3 66.5 L687.1 64.1 L690.9 61.8 L689.1 58.2 L684.9 59.9 L680.7 61.5 L676.6 63.2 L672.4 64.9 L668.2 66.6 L664.0 68.3 L659.8 70.1 L655.6 71.9 L651.4 73.8 L647.2 75.7 L642.9 77.6 L638.7 79.6 L634.5 81.7 L630.2 83.8 L626.0 86.1 L621.7 88.4 L617.4 90.7 L613.2 93.2 L608.9 95.8 L604.6 98.4 L600.3 101.2 L595.9 104.0 L591.6 107.0 L587.3 110.1 L583.0 113.3 L578.6 116.6 L574.3 120.1 L570.0 123.7 L565.6 127.4 L560.8 131.8 L555.2 138.2 L550.1 144.3 L545.1 150.6 L540.4 156.9 L535.7 163.2 L531.3 169.6 L527.0 176.0 L522.7 182.5 L518.6 189.1 L514.6 195.6 L510.7 202.2 L506.9 208.8 L503.1 215.4 L499.3 222.1 L495.6 228.8 L491.9 235.4 L488.1 242.1 L484.4 248.8 L480.7 255.5 L476.9 262.2 L473.1 268.9 L469.2 275.6 L465.2 282.3 L461.2 289.0 L457.0 295.6 L452.8 302.3 L448.4 308.9 L443.9 315.6 L439.2 322.2 L434.8 328.2 L430.4 333.0 L425.5 338.2 L420.5 343.2 L415.3 347.9 L410.1 352.5 L404.8 356.9 L399.4 361.1 L393.8 365.1 L388.2 369.0 L382.5 372.6 L376.7 376.1 L370.8 379.4 L364.9 382.5 L358.8 385.4 L352.6 388.1 L346.4 390.7 L340.1 393.1 L333.6 395.3 L327.1 397.3 L320.5 399.2 L313.8 400.8 L307.1 402.3 L300.2 403.7 L293.3 404.8 L286.3 405.8 L279.2 406.6 L272.0 407.2 L264.7 407.6 L257.4 407.9 L249.7 408.0 Z" fill="#bd8236" stroke="none"/><path d="M302.5 348.8 L310.6 347.7 L318.7 346.4 L326.7 345.0 L334.4 343.4 L342.0 341.6 L349.4 339.6 L356.7 337.5 L363.7 335.2 L370.7 332.7 L377.4 330.0 L384.1 327.2 L390.5 324.1 L396.8 320.9 L403.0 317.5 L409.0 313.9 L414.8 310.1 L420.5 306.1 L426.0 302.0 L431.4 297.6 L436.6 293.1 L441.7 288.4 L446.7 283.5 L451.5 278.4 L456.2 273.2 L460.7 267.7 L465.2 262.1 L469.5 256.3 L473.7 250.3 L477.8 244.2 L481.9 237.7 L484.8 232.1 L487.6 227.0 L490.3 221.9 L493.0 216.7 L495.8 211.6 L498.5 206.6 L501.3 201.5 L504.0 196.5 L506.8 191.5 L509.6 186.5 L512.4 181.5 L515.3 176.6 L518.2 171.7 L521.1 166.9 L524.0 162.1 L527.0 157.4 L530.1 152.6 L533.2 148.0 L536.4 143.4 L539.6 138.8 L542.9 134.3 L546.3 129.9 L549.7 125.5 L553.2 121.1 L556.8 116.9 L560.5 112.7 L564.3 108.5 L568.2 104.5 L572.1 100.5 L576.2 96.6 L573.8 93.4 L569.0 96.6 L564.2 99.9 L559.6 103.3 L555.0 106.9 L550.6 110.5 L546.2 114.2 L541.8 118.1 L537.6 122.0 L533.4 126.0 L529.3 130.1 L525.2 134.3 L521.3 138.5 L517.4 142.8 L513.5 147.2 L509.7 151.6 L506.0 156.1 L502.3 160.7 L498.6 165.3 L495.1 169.9 L491.5 174.6 L488.0 179.4 L484.6 184.1 L481.1 188.9 L477.7 193.7 L474.4 198.5 L471.0 203.3 L467.7 208.2 L464.4 213.0 L461.2 217.9 L458.1 222.3 L454.2 227.6 L450.0 232.9 L445.9 237.9 L441.7 242.7 L437.4 247.4 L433.1 251.8 L428.7 256.0 L424.3 260.1 L419.8 263.9 L415.2 267.6 L410.6 271.1 L405.8 274.5 L401.0 277.7 L396.1 280.7 L391.0 283.6 L385.9 286.3 L380.6 288.9 L375.2 291.4 L369.7 293.7 L364.0 295.9 L358.2 298.0 L352.2 299.9 L346.1 301.7 L339.7 303.4 L333.2 305.0 L326.5 306.5 L319.6 307.8 L312.5 309.0 L305.2 310.1 L297.5 311.2 Z" fill="#bd8236" stroke="none"/></g>
<g transform="translate(555 75) scale(0.1172)">
<defs>
<path id="swl" d="M0 0 C8 -10 22 -2 18 12 C12 28 -15 25 -20 5 C-25 -20 5 -35 28 -20" fill="none" stroke="#f7e3a3" stroke-width="5" stroke-linecap="round"/>
</defs>
<g fill="#e4b716">
<ellipse cx="105" cy="228" rx="65" ry="45"/>
<circle cx="240" cy="150" r="55"/><circle cx="310" cy="152" r="50"/><circle cx="215" cy="215" r="45"/>
<circle cx="330" cy="232" r="60"/><circle cx="372" cy="278" r="42"/><circle cx="215" cy="270" r="42"/>
<path d="M370 200 C440 190 500 140 560 125 C620 110 660 130 690 105 C720 100 735 130 715 165 C700 200 660 210 640 240 C620 290 560 320 480 320 C430 315 400 290 380 270 Z"/>
<circle cx="665" cy="237" r="45"/><circle cx="730" cy="200" r="50"/><circle cx="715" cy="275" r="45"/><circle cx="560" cy="170" r="45"/><circle cx="545" cy="275" r="50"/><circle cx="640" cy="285" r="45"/><circle cx="780" cy="175" r="55"/><circle cx="850" cy="190" r="60"/><circle cx="930" cy="165" r="55"/><circle cx="1000" cy="155" r="50"/>
<circle cx="800" cy="268" r="60"/><circle cx="880" cy="275" r="55"/><circle cx="965" cy="265" r="60"/><circle cx="760" cy="240" r="45"/>
<circle cx="956" cy="190" r="60"/><circle cx="1046" cy="172" r="55"/><circle cx="1110" cy="192" r="48"/><circle cx="956" cy="290" r="55"/><circle cx="996" cy="310" r="40"/>
<path d="M1250 60 C1180 40 1145 100 1160 140 C1180 180 1230 190 1270 165 C1230 160 1215 130 1230 105 C1245 85 1280 90 1300 100 C1320 80 1295 55 1250 60 Z"/>
<circle cx="1226" cy="252" r="45"/><circle cx="1306" cy="242" r="50"/><circle cx="1268" cy="288" r="40"/><circle cx="1340" cy="270" r="35"/>
<circle cx="1396" cy="162" r="60"/><circle cx="1486" cy="130" r="50"/><circle cx="1576" cy="150" r="60"/><circle cx="1456" cy="222" r="55"/><circle cx="1576" cy="228" r="55"/><circle cx="1636" cy="200" r="45"/><circle cx="1330" cy="170" r="40"/>
<circle cx="1590" cy="290" r="40"/>
<path d="M1656 170 C1716 160 1736 220 1776 250 C1806 270 1846 260 1856 230 C1836 220 1826 200 1856 190 C1896 190 1906 240 1886 270 C1856 300 1776 310 1716 280 C1686 260 1666 220 1656 170 Z"/>
</g>
<circle cx="1562" cy="302" r="18" fill="#fff"/>
<circle cx="215" cy="272" r="16" fill="#fff"/>
<use href="#swl" transform="translate(262 160) scale(1.6)"/>
<use href="#swl" transform="translate(120 228) scale(1.2)"/>
<use href="#swl" transform="translate(330 235) scale(1.4)"/>
<use href="#swl" transform="translate(560 220) scale(1.8)"/>
<use href="#swl" transform="translate(800 180) scale(1.5)"/>
<use href="#swl" transform="translate(880 270) scale(1.5)"/>
<use href="#swl" transform="translate(980 200) scale(1.6)"/>
<use href="#swl" transform="translate(1050 190) scale(1.4)"/>
<use href="#swl" transform="translate(1270 255) scale(1.3)"/>
<use href="#swl" transform="translate(1460 180) scale(1.7)"/>
<use href="#swl" transform="translate(1580 210) scale(1.5)"/>
<use href="#swl" transform="translate(1760 240) scale(1.2)"/>
</g>
<g transform="translate(125 175) scale(0.14423)"><defs><path id="msp" d="M0 0 C8 -10 22 -2 18 11 C13 26 -14 25 -19 5 C-24 -18 6 -32 28 -18" fill="none" stroke="#fff" stroke-width="9" stroke-linecap="round"/></defs><g fill="#a8892f"><circle cx="255" cy="262" r="232"/><circle cx="483.0" cy="262.0" r="16"/><circle cx="477.3" cy="312.7" r="16"/><circle cx="460.4" cy="360.9" r="16"/><circle cx="433.3" cy="404.2" r="16"/><circle cx="397.2" cy="440.3" r="16"/><circle cx="353.9" cy="467.4" r="16"/><circle cx="305.7" cy="484.3" r="16"/><circle cx="255.0" cy="490.0" r="16"/><circle cx="204.3" cy="484.3" r="16"/><circle cx="156.1" cy="467.4" r="16"/><circle cx="112.8" cy="440.3" r="16"/><circle cx="76.7" cy="404.2" r="16"/><circle cx="49.6" cy="360.9" r="16"/><circle cx="32.7" cy="312.7" r="16"/><circle cx="27.0" cy="262.0" r="16"/><circle cx="32.7" cy="211.3" r="16"/><circle cx="49.6" cy="163.1" r="16"/><circle cx="76.7" cy="119.8" r="16"/><circle cx="112.8" cy="83.7" r="16"/><circle cx="156.1" cy="56.6" r="16"/><circle cx="204.3" cy="39.7" r="16"/><circle cx="255.0" cy="34.0" r="16"/><circle cx="305.7" cy="39.7" r="16"/><circle cx="353.9" cy="56.6" r="16"/><circle cx="397.2" cy="83.7" r="16"/><circle cx="433.3" cy="119.8" r="16"/><circle cx="460.4" cy="163.1" r="16"/><circle cx="477.3" cy="211.3" r="16"/></g><path fill="#fff" d="M239.4 23.9 L248.1 27.2 L256.4 30.8 L264.5 34.6 L272.2 38.7 L279.7 43.0 L286.9 47.5 L293.8 52.2 L300.4 57.2 L306.7 62.3 L312.7 67.6 L318.4 73.1 L323.8 78.8 L329.0 84.6 L333.9 90.6 L338.5 96.8 L342.8 103.0 L346.9 109.4 L350.6 116.0 L354.1 122.6 L357.4 129.4 L360.3 136.3 L363.1 143.2 L365.5 150.3 L367.7 157.5 L369.6 164.7 L371.3 172.0 L372.7 179.4 L373.8 186.8 L374.7 194.3 L375.4 201.8 L375.2 204.9 L374.9 207.6 L374.3 210.1 L373.6 212.4 L372.8 214.5 L371.9 216.3 L370.8 217.9 L369.6 219.4 L368.4 220.8 L367.0 222.1 L365.5 223.3 L363.8 224.4 L362.0 225.5 L360.0 226.6 L357.8 227.6 L355.4 228.6 L352.8 229.5 L349.9 230.4 L346.9 231.2 L343.6 231.9 L340.1 232.6 L336.4 233.2 L332.4 233.7 L328.3 234.1 L323.9 234.4 L319.3 234.6 L314.6 234.8 L309.6 234.8 L304.4 234.7 L298.8 234.5 L301.2 289.5 L307.4 288.8 L313.7 287.9 L319.9 286.9 L325.9 285.8 L331.8 284.6 L337.5 283.1 L343.0 281.6 L348.4 279.9 L353.6 278.0 L358.6 275.9 L363.5 273.7 L368.1 271.3 L372.6 268.7 L376.9 265.9 L381.0 262.9 L384.8 259.7 L388.4 256.3 L391.7 252.6 L394.8 248.8 L397.5 244.7 L399.8 240.5 L401.9 236.1 L403.5 231.6 L404.8 226.9 L405.7 222.2 L406.2 217.5 L406.3 212.7 L406.1 207.8 L405.5 203.0 L404.6 198.2 L403.0 189.8 L401.1 181.5 L398.9 173.3 L396.5 165.2 L393.7 157.3 L390.7 149.4 L387.4 141.8 L383.9 134.2 L380.1 126.9 L376.0 119.6 L371.6 112.6 L367.0 105.7 L362.1 99.0 L356.9 92.5 L351.5 86.2 L345.9 80.2 L339.9 74.3 L333.8 68.6 L327.3 63.2 L320.7 58.0 L313.7 53.0 L306.6 48.3 L299.2 43.9 L291.5 39.7 L283.6 35.7 L275.5 32.0 L267.1 28.6 L258.5 25.5 L249.7 22.7 L240.6 20.1 Z"/><path fill="#fff" d="M64.0 372.0 L64.3 364.8 L64.9 357.9 L65.6 351.0 L66.6 344.3 L67.7 337.7 L69.1 331.2 L70.7 324.9 L72.4 318.8 L74.4 312.9 L76.6 307.1 L78.9 301.5 L81.4 296.2 L84.1 291.0 L87.0 286.0 L90.0 281.3 L93.2 276.8 L96.6 272.5 L100.1 268.4 L103.8 264.6 L107.6 261.1 L111.6 257.7 L115.7 254.7 L120.0 251.9 L124.3 249.3 L128.9 247.0 L133.5 245.0 L138.3 243.2 L143.2 241.6 L148.3 240.3 L153.4 239.4 L157.4 239.1 L161.8 238.9 L166.2 238.8 L170.4 238.9 L174.6 239.2 L178.7 239.6 L182.7 240.2 L186.7 240.8 L190.6 241.6 L194.5 242.5 L198.3 243.5 L202.1 244.7 L205.9 245.9 L209.6 247.2 L213.4 248.5 L217.1 250.0 L220.8 251.6 L224.5 253.2 L228.2 254.8 L231.9 256.6 L235.7 258.4 L239.4 260.2 L243.2 262.1 L246.9 264.0 L250.7 265.9 L254.6 267.8 L258.5 269.8 L262.4 271.8 L266.3 273.8 L270.3 275.7 L289.7 224.3 L285.7 223.2 L281.6 222.1 L277.5 221.0 L273.4 219.8 L269.2 218.6 L264.9 217.4 L260.6 216.2 L256.2 215.0 L251.8 213.8 L247.3 212.7 L242.8 211.6 L238.2 210.5 L233.6 209.5 L228.9 208.6 L224.1 207.7 L219.3 206.9 L214.5 206.2 L209.6 205.7 L204.6 205.2 L199.6 204.9 L194.6 204.7 L189.5 204.6 L184.3 204.7 L179.1 205.0 L173.9 205.5 L168.6 206.1 L163.3 206.9 L157.9 207.9 L152.5 209.1 L146.6 210.6 L139.9 213.0 L133.6 215.6 L127.5 218.5 L121.7 221.7 L116.2 225.2 L110.9 229.0 L105.9 233.0 L101.2 237.3 L96.7 241.8 L92.5 246.5 L88.6 251.4 L84.9 256.6 L81.5 261.9 L78.4 267.3 L75.5 273.0 L72.8 278.8 L70.4 284.7 L68.3 290.8 L66.3 297.0 L64.6 303.3 L63.2 309.8 L61.9 316.3 L60.9 323.0 L60.1 329.8 L59.6 336.6 L59.2 343.6 L59.1 350.6 L59.2 357.7 L59.5 364.8 L60.0 372.0 Z"/><path fill="#fff" d="M490.5 350.6 L486.0 355.0 L481.3 359.1 L476.4 362.9 L471.5 366.6 L466.4 369.9 L461.2 373.0 L455.9 375.9 L450.5 378.6 L445.0 381.0 L439.5 383.2 L433.8 385.2 L428.2 387.0 L422.4 388.5 L416.6 389.8 L410.8 390.9 L404.9 391.7 L399.1 392.3 L393.2 392.8 L387.3 392.9 L381.4 392.9 L375.5 392.7 L369.7 392.2 L363.9 391.6 L358.1 390.7 L352.3 389.6 L346.7 388.3 L341.0 386.8 L335.5 385.1 L330.0 383.1 L324.9 381.1 L322.1 379.5 L319.3 377.7 L316.6 375.8 L314.2 373.8 L311.9 371.8 L309.8 369.6 L307.9 367.4 L306.1 365.1 L304.4 362.8 L302.9 360.3 L301.5 357.8 L300.2 355.2 L299.0 352.5 L298.0 349.7 L297.1 346.8 L296.2 343.8 L295.5 340.7 L294.8 337.5 L294.3 334.2 L293.9 330.8 L293.6 327.3 L293.4 323.7 L293.2 320.0 L293.2 316.2 L293.3 312.3 L293.6 308.4 L293.9 304.3 L294.3 300.2 L294.8 295.9 L295.5 291.3 L240.5 288.7 L240.7 294.0 L241.0 299.6 L241.4 305.1 L242.0 310.5 L242.7 315.8 L243.6 321.1 L244.6 326.3 L245.8 331.5 L247.1 336.5 L248.6 341.4 L250.3 346.3 L252.1 351.0 L254.1 355.6 L256.3 360.1 L258.7 364.5 L261.2 368.7 L264.0 372.8 L266.9 376.8 L270.0 380.5 L273.3 384.1 L276.7 387.5 L280.3 390.8 L284.1 393.8 L288.1 396.6 L292.2 399.2 L296.5 401.6 L300.9 403.7 L305.4 405.6 L310.0 407.3 L315.1 408.9 L322.0 410.6 L328.7 412.0 L335.5 413.1 L342.2 414.0 L349.0 414.6 L355.7 415.0 L362.4 415.1 L369.1 414.9 L375.8 414.5 L382.4 413.9 L389.0 413.0 L395.6 411.9 L402.0 410.6 L408.4 409.0 L414.7 407.1 L420.9 405.1 L427.0 402.8 L433.0 400.3 L438.9 397.6 L444.7 394.6 L450.3 391.4 L455.8 388.0 L461.1 384.4 L466.3 380.6 L471.3 376.6 L476.1 372.3 L480.8 367.9 L485.2 363.2 L489.5 358.4 L493.5 353.4 Z"/><circle cx="272" cy="268" r="30" fill="#fff"/><use href="#msp" transform="translate(140 85) scale(1.00)"/><use href="#msp" transform="translate(205 160) scale(1.10)"/><use href="#msp" transform="translate(300 125) scale(1.00)"/><use href="#msp" transform="translate(320 200) scale(0.90)"/><use href="#msp" transform="translate(105 180) scale(1.00)"/><use href="#msp" transform="translate(85 215) scale(0.80)"/><use href="#msp" transform="translate(150 295) scale(1.00)"/><use href="#msp" transform="translate(190 350) scale(1.00)"/><use href="#msp" transform="translate(345 330) scale(1.00)"/><use href="#msp" transform="translate(385 285) scale(1.00)"/><use href="#msp" transform="translate(400 130) scale(0.90)"/><use href="#msp" transform="translate(425 180) scale(0.90)"/><use href="#msp" transform="translate(455 310) scale(1.00)"/><use href="#msp" transform="translate(425 345) scale(0.90)"/><use href="#msp" transform="translate(110 390) scale(0.90)"/><use href="#msp" transform="translate(130 430) scale(0.90)"/><use href="#msp" transform="translate(245 440) scale(0.90)"/><use href="#msp" transform="translate(300 445) scale(1.00)"/></g>
<g transform="translate(260 200) scale(0.09615)" fill="#a8892f"><circle cx="255" cy="205" r="92"/><circle cx="180" cy="275" r="75"/><circle cx="235" cy="335" r="75"/><circle cx="320" cy="320" r="55"/><path d="M160 370 C110 350 100 280 130 230 C130 170 190 110 260 120 C330 120 370 180 360 230 C390 240 400 260 410 270 C500 240 600 250 680 270 C590 270 520 300 470 340 C420 380 320 390 260 370 C230 400 180 400 160 370 Z"/><path d="M293.9 295.7 L293.9 299.5 L292.6 303.5 L290.0 307.2 L286.2 310.3 L281.2 312.3 L275.5 312.9 L269.5 311.8 L263.7 309.0 L258.5 304.4 L254.6 298.2 L252.3 290.9 L252.1 282.8 L254.2 274.5 L258.6 266.8 L265.2 260.2 L273.7 255.4 L283.5 253.0 L294.0 253.2 L304.5 256.3 L314.1 262.3 L322.1 270.9 L327.7 281.6 L330.4 293.8 L329.8 306.8 M330 300 C420 300 500 278 600 268" fill="none" stroke="#fff" stroke-width="20" stroke-linecap="round"/></g>
<g transform="translate(370 200) scale(0.09615)" fill="#a8892f"><circle cx="255" cy="190" r="80"/><circle cx="160" cy="275" r="80"/><circle cx="230" cy="360" r="72"/><circle cx="320" cy="340" r="55"/><path d="M150 400 C90 380 60 300 100 240 C120 170 180 110 260 115 C330 120 360 170 370 200 C450 200 520 210 560 235 C600 250 650 260 690 270 C620 270 560 280 500 295 C470 330 420 380 330 390 C300 430 200 440 150 400 Z"/><path d="M303.7 233.9 L302.6 237.1 L300.4 240.0 L297.1 242.3 L293.0 243.6 L288.3 243.7 L283.5 242.3 L278.9 239.4 L275.2 235.1 L272.7 229.5 L271.9 223.1 L272.9 216.4 L275.9 210.0 L280.9 204.3 L287.5 200.1 L295.3 197.8 L303.9 197.8 L312.4 200.2 L320.3 205.1 L326.7 212.3 L331.1 221.2 L332.9 231.4 L331.8 242.0 L327.7 252.3 L320.6 261.3 M330 262 C420 262 500 245 562 238" fill="none" stroke="#fff" stroke-width="20" stroke-linecap="round"/></g>
<g transform="translate(460 205) scale(0.09615)" fill="#a8892f"><circle cx="255" cy="210" r="85"/><circle cx="170" cy="290" r="80"/><circle cx="210" cy="360" r="60"/><circle cx="310" cy="320" r="55"/><path d="M140 400 C90 360 80 250 130 200 C160 130 260 110 330 150 C380 180 390 230 380 250 C430 220 490 230 520 270 C540 300 555 340 555 350 C520 300 480 270 430 290 C380 340 330 360 260 340 C270 380 230 420 140 400 Z"/><path d="M222.5 300.0 L223.1 302.4 L222.9 305.1 L221.7 307.8 L219.6 310.3 L216.6 312.1 L212.9 313.0 L208.9 312.7 L205.0 311.1 L201.4 308.3 L198.7 304.4 L197.2 299.5 L197.2 294.2 L198.8 288.8 L202.0 284.0 L206.7 280.1 L212.6 277.6 L219.3 277.0 L226.1 278.3 L232.4 281.6 L237.7 286.9 L241.4 293.7 L243.1 301.5 L242.4 309.7 L239.3 317.6" fill="none" stroke="#fff" stroke-width="16" stroke-linecap="round"/></g>
<g transform="translate(280 330) scale(0.09615)" fill="#a8892f"><circle cx="235" cy="205" r="80"/><circle cx="150" cy="270" r="70"/><circle cx="230" cy="325" r="80"/><path d="M110 330 C70 300 60 240 100 200 C130 140 200 120 260 130 C310 140 340 190 330 230 C400 200 500 200 560 210 C620 220 680 240 720 260 C660 245 560 230 470 250 C420 270 400 330 360 370 C320 410 220 420 180 390 C150 370 120 350 110 330 Z"/><path d="M319.1 271.2 L321.1 268.7 L324.1 266.8 L327.8 266.0 L332.0 266.5 L336.1 268.4 L339.5 271.9 L341.8 276.6 L342.5 282.1 L341.4 287.9 L338.2 293.3 L333.3 297.7 L326.9 300.4 L319.6 301.0 L312.2 299.2 L305.4 294.9 L300.1 288.5 L297.0 280.4 L296.5 271.3 L299.0 262.3 L304.4 254.2 L312.3 247.9 L322.2 244.4 L333.0 244.0 L343.6 247.2" fill="none" stroke="#fff" stroke-width="15" stroke-linecap="round"/></g>
<g transform="translate(370 330) scale(0.09615)" fill="#a8892f"><circle cx="250" cy="240" r="80"/><circle cx="170" cy="320" r="70"/><circle cx="210" cy="390" r="65"/><circle cx="320" cy="385" r="55"/><path d="M150 430 C100 400 95 320 120 260 C150 190 240 160 320 190 C370 210 400 250 430 260 C500 230 560 160 620 140 C670 125 710 120 730 115 C680 130 600 170 560 230 C540 300 520 330 500 350 C440 400 380 420 330 420 C300 450 200 460 150 430 Z"/><path fill="#fff" d="M230 350 C240 320 290 320 340 330 C420 340 500 320 545 270 C520 340 450 370 380 360 C330 360 300 370 280 380 C240 400 220 370 230 350 Z"/></g>
<g transform="translate(105 278) scale(0.25)" fill="none" stroke="#eecd4c" stroke-width="5" stroke-linecap="round" stroke-linejoin="round"><path d="M215 125 C195 120 180 108 183 92 C186 78 205 70 207 52 C208 32 185 22 168 30 C150 38 148 62 165 70 C178 75 186 62 178 52"/><path d="M215 125 A21 21 0 0 1 240 100 A20 20 0 0 1 272 93 A18 18 0 0 1 302 96 A17 17 0 0 1 326 112 A20 20 0 0 1 350 136 A19 19 0 0 1 362 166 A17 17 0 0 1 350 192 A19 19 0 0 1 318 196"/><path d="M294.6 160.8 L293.9 158.8 L294.1 156.5 L295.2 154.2 L297.2 152.3 L299.9 151.1 L303.1 150.9 L306.4 151.9 L309.3 154.2 L311.4 157.4 L312.3 161.5 L311.7 165.8 L309.6 169.9 L306.0 173.1 L301.3 175.1 L296.1 175.3 L290.8 173.7 L286.2 170.3 L282.9 165.3 L281.5 159.2 L282.1 152.8 L285.0 146.8 L290.0 142.0 L296.4 139.0 L303.8 138.3"/><path d="M105 165 A17 17 0 0 1 90 140 A16 16 0 0 1 96 114 A18 18 0 0 1 122 100 A17 17 0 0 1 150 102"/><path d="M150 102 C160 92 168 80 165 70"/><path d="M134.5 135.0 L134.8 136.7 L134.4 138.5 L133.2 140.3 L131.4 141.6 L129.0 142.2 L126.4 142.0 L123.9 140.8 L121.8 138.7 L120.5 135.8 L120.2 132.4 L121.2 128.9 L123.4 125.9 L126.6 123.7 L130.6 122.6 L135.0 123.0 L139.0 125.0 L142.4 128.3 L144.4 132.7 L144.9 137.8 L143.6 142.9 L140.6 147.4 L136.0 150.8 L130.5 152.4 L124.4 152.1"/><path d="M245 205 A17 17 0 0 1 230 180 A18 18 0 0 1 200 175 A21 21 0 0 1 165 180 A21 21 0 0 1 130 175 A16 16 0 0 1 105 165"/><path d="M245 205 C242 220 238 232 240 245"/><path d="M200 250 A25 25 0 0 1 232 224 A24 24 0 0 1 272 218 A26 26 0 0 1 312 234 A24 24 0 0 1 338 265 A22 22 0 0 1 342 302 A23 23 0 0 1 326 336 A22 22 0 0 1 296 356 A24 24 0 0 1 256 362 A24 24 0 0 1 220 346 A22 22 0 0 1 198 316 A21 21 0 0 1 194 282 A20 20 0 0 1 200 250"/><path d="M237.9 299.5 L236.1 299.0 L234.4 297.8 L233.2 295.8 L232.7 293.4 L233.1 290.7 L234.6 288.1 L237.0 286.1 L240.1 285.0 L243.6 285.0 L247.2 286.3 L250.2 288.9 L252.3 292.5 L253.0 296.8 L252.2 301.4 L249.8 305.5 L246.0 308.8 L241.1 310.6 L235.6 310.7 L230.3 308.8 L225.7 305.1 L222.6 300.0 L221.3 293.8 L222.2 287.4 L225.3 281.5"/><path d="M283.1 269.1 L281.5 268.6 L280.0 267.5 L278.9 265.7 L278.4 263.5 L278.8 261.1 L280.1 258.8 L282.3 257.0 L285.1 256.0 L288.3 256.0 L291.5 257.2 L294.2 259.5 L296.0 262.8 L296.7 266.7 L296.0 270.7 L293.8 274.5 L290.4 277.4 L286.0 279.0 L281.1 279.1 L276.3 277.4 L272.2 274.1 L269.3 269.5 L268.2 263.9 L269.0 258.2 L271.7 252.8"/><path d="M302.9 322.5 L301.1 322.0 L299.4 320.8 L298.2 318.8 L297.7 316.4 L298.1 313.7 L299.6 311.1 L302.0 309.1 L305.1 308.0 L308.6 308.0 L312.2 309.3 L315.2 311.9 L317.3 315.5 L318.0 319.8 L317.2 324.4 L314.8 328.5 L311.0 331.8 L306.1 333.6 L300.6 333.7 L295.3 331.8 L290.7 328.1 L287.6 323.0 L286.3 316.8 L287.2 310.4 L290.3 304.5"/><path d="M253.3 333.6 L251.9 333.2 L250.5 332.2 L249.5 330.7 L249.1 328.7 L249.5 326.5 L250.7 324.5 L252.6 322.9 L255.1 322.0 L257.9 322.0 L260.7 323.1 L263.2 325.1 L264.8 328.0 L265.4 331.5 L264.7 335.1 L262.8 338.4 L259.8 341.0 L255.9 342.5 L251.5 342.5 L247.2 341.0 L243.6 338.1 L241.1 334.0 L240.0 329.1 L240.7 323.9 L243.2 319.2"/><path d="M195 290 A17 17 0 0 1 168 280 A17 17 0 0 1 140 284 A18 18 0 0 1 114 298 A16 16 0 0 1 88 304 A17 17 0 0 1 62 314"/><path d="M62 314 C55 318 48 320 44 321 C55 326 62 332 68 334"/><path d="M195 345 A21 21 0 0 1 160 352 A19 19 0 0 1 128 350 A18 18 0 0 1 98 345 A19 19 0 0 1 68 334"/><path d="M153.5 318.0 L153.7 319.2 L153.5 320.6 L152.8 321.9 L151.6 323.0 L150.0 323.7 L148.1 323.8 L146.1 323.3 L144.3 322.1 L142.9 320.3 L142.1 318.0 L142.1 315.4 L142.9 312.9 L144.6 310.6 L147.0 308.8 L150.0 307.9 L153.2 308.0 L156.4 309.2 L159.2 311.3 L161.2 314.3 L162.2 318.0 L162.1 321.9 L160.6 325.7 L158.0 329.0 L154.3 331.3"/><path d="M338 262 A20 20 0 0 1 360 236 A22 22 0 0 1 395 225 A23 23 0 0 1 430 240 A20 20 0 0 1 462 250 A18 18 0 0 1 492 255"/><path d="M492 255 C505 258 515 262 522 265 C510 272 500 278 490 282"/><path d="M490 282 A25 25 0 0 1 450 296 A30 30 0 0 1 400 302 A24 24 0 0 1 360 300"/><path d="M376.0 262.6 L375.6 261.2 L375.6 259.7 L376.2 258.1 L377.4 256.6 L379.1 255.6 L381.2 255.1 L383.5 255.4 L385.7 256.4 L387.6 258.3 L388.9 260.7 L389.4 263.6 L388.8 266.7 L387.3 269.5 L384.8 271.9 L381.6 273.4 L377.9 273.8 L374.2 273.0 L370.7 271.0 L367.9 267.9 L366.1 264.0 L365.7 259.5 L366.7 255.0 L369.2 250.9 L373.0 247.6"/><path d="M190 428 A21 21 0 0 1 210 400 A19 19 0 0 1 240 390 A19 19 0 0 1 256 362"/><path d="M292 360 A23 23 0 0 1 320 386 A19 19 0 0 1 350 396 A19 19 0 0 1 378 410 A18 18 0 0 1 406 422 A19 19 0 0 1 416 452 A19 19 0 0 1 396 476 A28 28 0 0 1 352 490 A25 25 0 0 1 310 486 A29 29 0 0 1 262 486 A26 26 0 0 1 220 476 A19 19 0 0 1 196 455 A17 17 0 0 1 190 428"/><path d="M242.4 443.8 L241.2 444.9 L239.4 445.6 L237.3 445.6 L235.2 444.7 L233.4 443.1 L232.2 440.8 L231.8 438.0 L232.5 435.1 L234.2 432.4 L236.9 430.4 L240.3 429.3 L244.1 429.5 L247.7 431.1 L250.7 433.9 L252.7 437.7 L253.3 442.2 L252.3 446.8 L249.7 450.9 L245.7 454.1 L240.7 455.7 L235.3 455.6 L230.0 453.6 L225.6 449.8 L222.6 444.6"/><path d="M352.4 443.8 L351.2 444.9 L349.4 445.6 L347.3 445.6 L345.2 444.7 L343.4 443.1 L342.2 440.8 L341.8 438.0 L342.5 435.1 L344.2 432.4 L346.9 430.4 L350.3 429.3 L354.1 429.5 L357.7 431.1 L360.7 433.9 L362.7 437.7 L363.3 442.2 L362.3 446.8 L359.7 450.9 L355.7 454.1 L350.7 455.7 L345.3 455.6 L340.0 453.6 L335.6 449.8 L332.6 444.6"/><path d="M302.0 418.2 L301.0 419.1 L299.5 419.7 L297.8 419.6 L296.0 419.0 L294.5 417.6 L293.5 415.7 L293.2 413.3 L293.7 410.9 L295.2 408.7 L297.4 407.0 L300.3 406.1 L303.4 406.3 L306.4 407.5 L309.0 409.9 L310.6 413.1 L311.1 416.8 L310.3 420.6 L308.1 424.1 L304.8 426.7 L300.6 428.1 L296.1 428.0 L291.7 426.3 L288.0 423.2 L285.5 418.8"/><path d="M215 300 A22 22 0 0 1 225 265 A21 21 0 0 1 258 252 A21 21 0 0 1 290 268"/><path d="M270 300 A19 19 0 0 1 290 275 A21 21 0 0 1 325 280 A19 19 0 0 1 335 310"/><path d="M215 340 A19 19 0 0 1 240 320 A22 22 0 0 1 275 330"/><path d="M90 330 A17 17 0 0 1 110 310 A18 18 0 0 1 140 315"/><path d="M395 280 A21 21 0 0 1 420 255 A21 21 0 0 1 455 262"/><path d="M230 470 A22 22 0 0 1 250 440 A21 21 0 0 1 285 445"/><path d="M320 470 A23 23 0 0 1 345 440 A22 22 0 0 1 380 450"/><path d="M240 165 A23 23 0 0 1 265 135 A24 24 0 0 1 305 130 A19 19 0 0 1 330 150"/></g>
<g transform="translate(495 335) scale(0.17578)" fill="#e3b61f"><path d="M35 135 C108 75 212 70 271 85 C315 95 330 120 330 155 L330 268 L60 268 Z"/><path d="M215 130 C248 87 296 82 323 97 C343 107 350 132 350 150 L350 268 L215 268 Z"/><path d="M410 130 C482 70 584 65 642 80 C685 90 700 115 700 150 L700 268 L410 268 Z"/><path d="M555 130 C591 83 642 78 671 93 C692 103 700 128 700 150 L700 268 L555 268 Z"/><path d="M700 150 C740 113 796 108 828 123 C852 133 860 158 860 170 L860 268 L700 268 Z"/><path d="M70 175 C115 165 178 160 214 175 C241 185 250 210 250 195 L250 268 L70 268 Z"/><path d="M200 170 C267 135 362 130 416 145 C456 155 470 180 470 190 L470 268 L200 268 Z"/><path d="M380 160 C430 145 500 140 540 155 C570 165 580 190 580 180 L580 268 L380 268 Z"/><path d="M540 170 C605 135 696 130 748 145 C787 155 800 180 800 190 L800 268 L540 268 Z"/><path d="M720 240 C787 195 882 190 936 205 C976 215 990 240 990 260 L990 268 L720 268 Z"/><rect x="60" y="200" width="880" height="68"/><path d="M850 105 C880 92 918 108 912 138 C905 155 880 155 868 145 C878 136 888 130 878 122 C868 118 858 125 850 132 Z"/><path d="M935 212 C958 195 996 200 997 226 C996 256 970 268 930 268 L900 268 L905 238 Z"/><path d="M42 238 C45 222 70 222 76 236 C80 250 70 264 56 268 L48 262 Z"/><path fill="#fff" d="M20 140 C45 150 66 182 62 222 C50 226 40 232 20 238 Z"/><g fill="none" stroke="#f3dc8a" stroke-width="5"><path d="M35 135 C108 75 212 70 271 85 C315 95 330 120 330 155"/><path d="M215 130 C248 87 296 82 323 97 C343 107 350 132 350 150"/><path d="M410 130 C482 70 584 65 642 80 C685 90 700 115 700 150"/><path d="M555 130 C591 83 642 78 671 93 C692 103 700 128 700 150"/><path d="M700 150 C740 113 796 108 828 123 C852 133 860 158 860 170"/><path d="M70 175 C115 165 178 160 214 175 C241 185 250 210 250 195"/><path d="M200 170 C267 135 362 130 416 145 C456 155 470 180 470 190"/><path d="M380 160 C430 145 500 140 540 155 C570 165 580 190 580 180"/><path d="M540 170 C605 135 696 130 748 145 C787 155 800 180 800 190"/><path d="M720 240 C787 195 882 190 936 205 C976 215 990 240 990 260"/><path d="M270 175 C300 160 330 175 322 200 C312 225 275 215 280 195"/><path d="M630 170 C660 150 695 170 685 195 C675 220 640 212 645 190"/><path d="M150 125 C170 115 195 125 190 145"/><path d="M480 120 C500 110 525 120 520 140"/><path d="M300 235 C320 220 345 235 338 255"/><path d="M690 230 C710 215 735 230 728 250"/></g></g>
<g transform="translate(735 350) scale(0.13672)" fill="#e0b522">
<defs>
<g id="syc">
<circle cx="125" cy="205" r="42"/><circle cx="175" cy="200" r="40"/><circle cx="215" cy="228" r="35"/><circle cx="100" cy="240" r="38"/><circle cx="160" cy="245" r="38"/><circle cx="210" cy="250" r="28"/>
<path d="M60 250 C55 225 80 225 90 240 C95 262 85 280 62 278 C70 268 72 258 60 250 Z"/>
<path d="M205 230 C235 240 250 220 262 200 C282 195 292 215 278 232 C292 238 302 246 305 252 C265 262 225 264 195 262 Z"/>
<path d="M110 215 C120 200 145 210 140 230 C133 248 105 240 110 225 M170 215 C180 200 200 210 195 228 M150 255 C175 245 200 250 230 245" fill="none" stroke="#f6e3a0" stroke-width="7"/>
</g>
</defs>
<use href="#syc"/>
<use href="#syc" transform="translate(675 0)"/>
<circle cx="548" cy="100" r="40"/><circle cx="598" cy="115" r="38"/><circle cx="505" cy="130" r="36"/><circle cx="560" cy="140" r="35"/>
<path d="M470 135 C500 205 570 218 650 212 C705 206 748 182 744 155 C740 132 712 128 704 148 C690 172 640 178 590 168 C540 158 500 140 470 135 Z"/>
<circle cx="430" cy="132" r="22"/><path d="M435 145 C445 155 450 160 458 168" fill="none" stroke="#e0b522" stroke-width="10"/>
<path d="M520 155 C560 160 595 185 650 192 M530 110 C545 90 575 100 568 125 M590 115 C600 100 625 110 618 130" fill="none" stroke="#f6e3a0" stroke-width="7"/>
</g>
<g transform="translate(600 165) scale(0.12695)" fill="#e8bc14">
<circle cx="505" cy="75" r="48"/><circle cx="440" cy="105" r="55"/><circle cx="575" cy="110" r="55"/><rect x="390" y="100" width="240" height="60" rx="25"/>
<ellipse cx="120" cy="222" rx="95" ry="20"/><ellipse cx="820" cy="180" rx="210" ry="26"/><ellipse cx="190" cy="355" rx="110" ry="20"/>
<circle cx="260" cy="220" r="55"/><circle cx="330" cy="215" r="45"/><circle cx="395" cy="250" r="55"/><circle cx="500" cy="215" r="60"/><circle cx="590" cy="250" r="60"/>
<circle cx="690" cy="210" r="55"/><circle cx="760" cy="215" r="45"/><circle cx="270" cy="330" r="50"/><circle cx="370" cy="310" r="55"/><circle cx="460" cy="320" r="50"/>
<circle cx="560" cy="320" r="55"/><circle cx="650" cy="320" r="55"/><circle cx="730" cy="300" r="55"/><circle cx="820" cy="320" r="50"/><circle cx="890" cy="340" r="50"/>
<rect x="250" y="260" width="650" height="80"/>
</g>
<g transform="translate(585 210) scale(0.14160)" fill="#e8bc14">
<path d="M505 -10 C515 60 600 100 615 170 C600 200 520 200 460 215 L740 240 C770 170 760 110 730 90 C660 50 590 20 575 -10 Z"/>
<ellipse cx="380" cy="250" rx="80" ry="25"/><ellipse cx="900" cy="230" rx="125" ry="28"/><ellipse cx="410" cy="310" rx="80" ry="20"/><ellipse cx="880" cy="355" rx="130" ry="22"/>
<circle cx="430" cy="250" r="45"/><circle cx="510" cy="260" r="50"/><circle cx="600" cy="250" r="50"/><circle cx="700" cy="260" r="50"/><circle cx="790" cy="220" r="55"/>
<circle cx="480" cy="330" r="45"/><circle cx="580" cy="340" r="50"/><circle cx="680" cy="340" r="50"/><circle cx="770" cy="330" r="50"/><circle cx="850" cy="300" r="45"/>
<rect x="420" y="230" width="480" height="110"/><circle cx="930" cy="290" r="45"/><rect x="880" y="250" width="90" height="90" rx="30"/>
<path d="M20 375 C80 390 130 400 180 378 C240 350 300 348 350 343 C400 338 450 343 480 348 L480 398 C430 402 380 396 330 400 C270 405 230 422 180 422 C120 418 60 402 20 375 Z"/>
</g>
<g fill="none" stroke="#f8e7a0" stroke-width="0.9" stroke-linecap="round">
<path d="M659 210 C660 220 672 225 674 232 C674 238 668 238 660 240"/><path d="M665 210 C668 218 680 222 683 230 C684 238 680 242 676 244"/>
<path d="M592 264 C605 266 612 262 620 259 C630 256 640 256 650 256"/>
</g>
<g fill="none" stroke="#f8e7a0" stroke-width="0.8" stroke-linecap="round">
<defs><path id="tsp" d="M0 0 C1.2 -1.5 3 -0.3 2.6 1.6 C2 3.6 -2 3.4 -2.6 0.8 C-3.2 -2.3 0.8 -4.2 3.5 -2.5"/></defs>
<use href="#tsp" x="664" y="179"/><use href="#tsp" x="657" y="180"/><use href="#tsp" x="671" y="180"/>
<use href="#tsp" x="633" y="193"/><use href="#tsp" x="643" y="199"/><use href="#tsp" x="663" y="194"/><use href="#tsp" x="676" y="197"/>
<use href="#tsp" x="689" y="191"/><use href="#tsp" x="700" y="203"/><use href="#tsp" x="712" y="207"/><use href="#tsp" x="651" y="206"/><use href="#tsp" x="625" y="208"/>
<use href="#tsp" x="645" y="246"/><use href="#tsp" x="657" y="250"/><use href="#tsp" x="672" y="250"/><use href="#tsp" x="687" y="248"/><use href="#tsp" x="699" y="243"/>
<use href="#tsp" x="655" y="259"/><use href="#tsp" x="670" y="260"/><use href="#tsp" x="685" y="260"/><use href="#tsp" x="700" y="258"/>
</g>
<g transform="translate(95 455) scale(0.13672)" fill="none" stroke="#a88a3a" stroke-width="7.5" stroke-linecap="round" stroke-linejoin="round"><path d="M385 190 A33 33 0 0 1 395 130 A35 35 0 0 1 445 92 A33 33 0 0 1 505 88 A28 28 0 0 1 545 118 A25 25 0 0 1 560 160 A21 21 0 0 1 575 195"/><path d="M420 185 A23 23 0 0 1 440 148 A29 29 0 0 1 490 132 A24 24 0 0 1 530 150 A21 21 0 0 1 545 185"/><path d="M345 240 A25 25 0 0 1 350 195 A26 26 0 0 1 395 180 A27 27 0 0 1 440 200 A23 23 0 0 1 455 240"/><path d="M350 245 C345 275 380 290 405 270 C425 250 410 220 385 225 C365 230 370 255 390 252"/><path d="M470 215 A30 30 0 0 1 520 195 A35 35 0 0 1 580 215 A31 31 0 0 1 630 240 A31 31 0 0 1 680 265 A31 31 0 0 1 730 290 A28 28 0 0 1 770 320"/><path d="M455 240 C470 290 500 330 560 370 C610 400 660 420 720 430"/><path d="M500 230 C540 270 560 320 610 350 C660 380 700 395 760 400"/><path d="M480 250 C520 240 545 265 530 290 C515 310 490 295 500 280"/><path d="M560 280 C600 270 620 300 600 320"/><path d="M120 330 A28 28 0 0 1 150 290 A33 33 0 0 1 205 265 A33 33 0 0 1 265 270 A35 35 0 0 1 315 310 A25 25 0 0 1 335 350"/><path d="M120 335 A27 27 0 0 0 100 380 A23 23 0 0 0 115 420 A25 25 0 0 0 135 460"/><path d="M150 420 C140 395 170 380 185 400 C200 425 170 440 155 425"/><path d="M210 330 C200 305 235 295 245 320 C255 345 220 355 215 335"/><path d="M260 360 C300 350 320 380 300 400"/><path d="M250 440 C310 425 380 430 450 445"/><path d="M240 470 C320 455 400 460 470 470"/><path d="M620 400 C700 420 780 425 860 410"/><path d="M640 430 C720 455 800 450 870 430"/><path d="M650 460 C740 475 820 470 880 455"/><path fill="#a88a3a" stroke="none" d="M700 395 C780 390 860 380 930 360 C900 390 850 410 780 415 C740 418 715 410 700 395 Z"/><path fill="#a88a3a" stroke="none" d="M330 440 C390 440 450 435 505 445 C470 465 420 470 370 465 C350 460 335 450 330 440 Z"/></g>
<g transform="translate(275 460) scale(0.12695)" fill="none" stroke="#a8862a" stroke-width="20" stroke-linecap="round" stroke-linejoin="round">
<defs>
<g id="bcl">
<path d="M300 235 C240 200 240 110 320 95 C370 85 410 110 420 150 C440 100 530 100 560 150 C580 200 560 240 510 230 C470 220 470 170 500 175"/>
<path d="M310 185 C320 150 360 160 355 200"/>
<path d="M300 280 C290 230 350 220 390 240 C440 260 440 330 400 350 C360 370 320 330 350 300 C360 290 380 300 375 310"/>
<path d="M55 410 C120 330 220 300 300 330 C380 370 430 350 460 300 C480 260 470 240 450 200"/>
<path d="M55 410 C150 380 250 400 320 430 C420 460 480 400 500 250"/>
</g>
</defs>
<use href="#bcl"/>
<use href="#bcl" transform="translate(380 -40)"/>
</g>
<g transform="translate(445 465) scale(0.11719)" fill="none" stroke="#a88a35" stroke-width="15" stroke-linecap="round" stroke-linejoin="round"><path d="M118 232 C70 215 60 150 110 125 C170 100 230 130 270 200 C320 280 380 340 480 345 C560 345 630 300 680 230 C730 160 790 105 860 110 C910 120 935 180 945 250"/><path d="M120.6 195.4 L121.5 191.8 L123.9 188.4 L127.6 185.8 L132.3 184.4 L137.6 184.7 L142.8 186.8 L147.4 190.8 L150.7 196.4 L152.1 203.2 L151.2 210.5 L147.9 217.4 L142.2 223.2 L134.7 227.2 L125.8 228.6 L116.6 227.1 L108.0 222.6 L101.0 215.3 L96.4 205.8 L94.9 194.9 L97.0 183.7 L102.7 173.4 L111.7 165.1 L123.1 159.9 L136.0 158.4"/><path d="M158.7 313.1 L159.9 310.6 L162.2 308.4 L165.3 307.0 L169.0 306.7 L173.0 307.7 L176.6 310.1 L179.4 313.8 L181.0 318.5 L181.0 323.7 L179.2 329.0 L175.7 333.7 L170.6 337.2 L164.4 339.0 L157.6 338.7 L150.9 336.2 L145.2 331.5 L141.0 325.0 L139.0 317.2 L139.6 308.9 L142.9 300.9 L148.7 294.0 L156.6 289.2 L165.9 287.0 L175.8 287.9"/><path d="M195 335 C230 335 260 340 290 342"/><path d="M325.5 149.4 L324.9 146.4 L325.4 143.0 L327.1 139.6 L330.0 136.7 L333.9 134.6 L338.6 133.8 L343.6 134.4 L348.5 136.6 L352.8 140.5 L355.9 145.7 L357.5 151.9 L357.1 158.6 L354.7 165.3 L350.2 171.2 L344.0 175.8 L336.3 178.5 L327.9 178.8 L319.4 176.6 L311.6 171.9 L305.3 164.9 L301.1 156.1 L299.6 146.1 L301.1 135.7 L305.6 125.9"/><path d="M340 185 C345 200 350 210 355 218"/><path d="M444.6 187.8 L441.0 184.3 L438.8 179.4 L438.4 173.4 L440.3 167.1 L444.7 161.6 L451.1 157.6 L459.1 156.0 L467.7 157.3 L475.8 161.8 L482.2 169.2 L485.9 178.8 L486.0 189.6 L482.3 200.4 L474.9 209.7 L464.2 216.2 L451.4 218.8 L438.0 216.9 L425.5 210.3 L415.7 199.4 L409.8 185.4 L409.0 169.6 L413.8 154.0 L423.8 140.4 L438.3 130.8"/><path d="M400 165 C390 210 430 260 480 270 C540 280 600 230 640 150"/><path d="M536.1 111.7 L536.6 108.3 L538.5 105.1 L541.5 102.4 L545.6 100.8 L550.4 100.5 L555.4 102.0 L559.9 105.2 L563.3 109.9 L565.2 115.9 L565.0 122.5 L562.6 129.1 L558.1 134.8 L551.6 139.0 L543.8 141.1 L535.4 140.6 L527.2 137.3 L520.2 131.4 L515.2 123.2 L513.0 113.6 L513.9 103.3 L518.1 93.5 L525.4 85.3 L535.2 79.5 L546.7 77.0"/><path d="M580 110 C610 108 640 106 670 108"/><path d="M518.1 231.0 L517.2 228.9 L517.1 226.3 L517.8 223.6 L519.4 221.1 L521.9 219.0 L525.2 217.8 L528.9 217.5 L532.8 218.4 L536.5 220.5 L539.5 223.8 L541.5 228.1 L542.2 233.0 L541.5 238.2 L539.1 243.1 L535.2 247.3 L530.1 250.4 L524.1 251.9 L517.6 251.5 L511.3 249.3 L505.7 245.1 L501.4 239.3 L498.9 232.3 L498.4 224.6 L500.3 216.9"/><path d="M640 300 C650 230 710 180 780 185 C840 190 870 230 885 265"/><path d="M729.1 289.1 L729.5 284.9 L731.7 280.7 L735.6 277.2 L740.8 275.1 L746.9 275.1 L753.1 277.3 L758.5 281.9 L762.2 288.4 L763.5 296.3 L762.0 304.6 L757.4 312.3 L750.2 318.2 L740.9 321.5 L730.5 321.5 L720.4 317.7 L711.8 310.5 L705.8 300.3 L703.6 288.3 L705.7 275.8 L712.1 264.3 L722.3 255.3 L735.4 250.1 L750.0 249.6 L764.4 254.2"/><path d="M820.6 339.3 L819.5 336.2 L819.5 332.4 L820.9 328.6 L823.7 325.2 L827.8 322.7 L832.9 321.6 L838.3 322.3 L843.6 324.8 L848.1 329.1 L851.2 335.0 L852.2 341.9 L851.0 349.1 L847.4 355.9 L841.5 361.5 L833.9 365.0 L825.1 366.1 L816.1 364.2 L807.8 359.5 L801.2 352.1 L797.1 342.7 L796.1 332.1 L798.5 321.3 L804.4 311.6 L813.3 303.9"/><path d="M865 350 C890 352 915 352 940 352"/><path d="M655.1 344.3 L656.5 342.3 L658.7 340.7 L661.6 339.8 L664.8 339.8 L668.1 340.9 L671.2 343.1 L673.6 346.3 L675.0 350.3 L675.2 354.8 L674.0 359.5 L671.3 363.8 L667.3 367.3 L662.2 369.6 L656.4 370.3 L650.3 369.3 L644.6 366.4 L639.8 361.8 L636.3 355.8 L634.7 348.8 L635.2 341.4 L637.9 334.1 L642.8 327.8 L649.4 322.9 L657.5 320.1"/><path d="M665 380 C675 395 685 410 692 425"/><path d="M798.4 229.5 L798.7 227.3 L799.8 225.0 L801.7 223.0 L804.4 221.5 L807.6 220.9 L811.0 221.3 L814.4 222.9 L817.4 225.5 L819.6 229.2 L820.7 233.5 L820.4 238.2 L818.7 242.9 L815.5 247.1 L811.1 250.3 L805.7 252.1 L799.7 252.3 L793.7 250.7 L788.2 247.4 L783.8 242.3 L780.8 236.0 L779.8 228.9 L780.9 221.5 L784.2 214.6 L789.6 208.6"/><path d="M700 130 C760 95 830 90 880 120"/></g>
<!--CLOUDS-->
</svg>
<div class="a" style="left:787px;top:490px;width:227px;height:20px;background:rgba(0,0,0,0.22)"></div>
<div class="a" style="left:797px;top:492px;font-size:10.8px;line-height:14px;color:#fff;white-space:nowrap">ID:25886870 NO:20190108104805413084</div>
<svg class="a" style="left:0;top:480px" width="240" height="40" viewBox="0 0 240 40">
<g transform="translate(10 5) scale(0.08789)" fill="#fff" stroke="#9c9c9c" stroke-width="9" stroke-linejoin="round" fill-rule="evenodd">
<path d="M110 90 L190 90 L155 282 L72 282 Z M128 118 L160 118 L150 172 L118 172 Z M113 200 L145 200 L135 252 L103 252 Z" stroke="none"/>
<path d="M208 90 L325 90 L312 160 L234 160 L212 282 L180 282 Z M240 114 L292 114 L288 136 L236 136 Z" stroke="none"/>
<path d="M250 178 L280 178 L268 238 L335 238 L330 282 L226 282 Z" stroke="none"/>
<path d="M300 178 L335 175 L320 205 L290 215 Z" stroke="none"/>
<path d="M515 62 L565 62 L558 88 L508 88 Z"/>
<path d="M412 92 L662 92 L656 114 L406 114 Z"/>
<path d="M462 130 L622 130 L610 182 L450 182 Z M495 148 L585 148 L582 164 L492 164 Z"/>
<path d="M400 200 L645 200 L638 228 L393 228 Z"/>
<path d="M498 228 L548 228 L530 300 L480 300 Z M485 300 L455 285 L470 270 Z"/>
<path d="M722 74 L972 74 L942 302 L690 302 Z M765 112 L918 112 L898 268 L742 268 Z"/>
<path d="M780 130 L812 130 L840 250 L808 250 Z M850 130 L880 130 L905 250 L875 250 Z"/>
<path d="M790 250 L830 140 L850 145 L812 255 Z M855 250 L892 140 L912 145 L875 255 Z"/>
</g>
</svg>
<div class="a" style="left:100px;top:490px;font-size:19px;line-height:22px;font-weight:bold;font-style:italic;color:#fff;white-space:nowrap;letter-spacing:-1px;text-shadow:0 0 1px #8a8a8a,0 0 1px #8a8a8a,0 0 0.5px #777">www.nipic.cn</div>
<div class="a" style="left:620px;top:518px;width:14px;height:2px;background:#f2f2f2;border-radius:2px"></div><div class="a" style="left:692px;top:518px;width:12px;height:2px;background:#f2f2f2;border-radius:2px"></div><div class="a" style="left:740px;top:518px;width:60px;height:2px;background:#f4f4f4"></div><div class="a" style="left:815px;top:518px;width:80px;height:2px;background:#f4f4f4"></div>
<!--WATERMARK-->
</body></html>
